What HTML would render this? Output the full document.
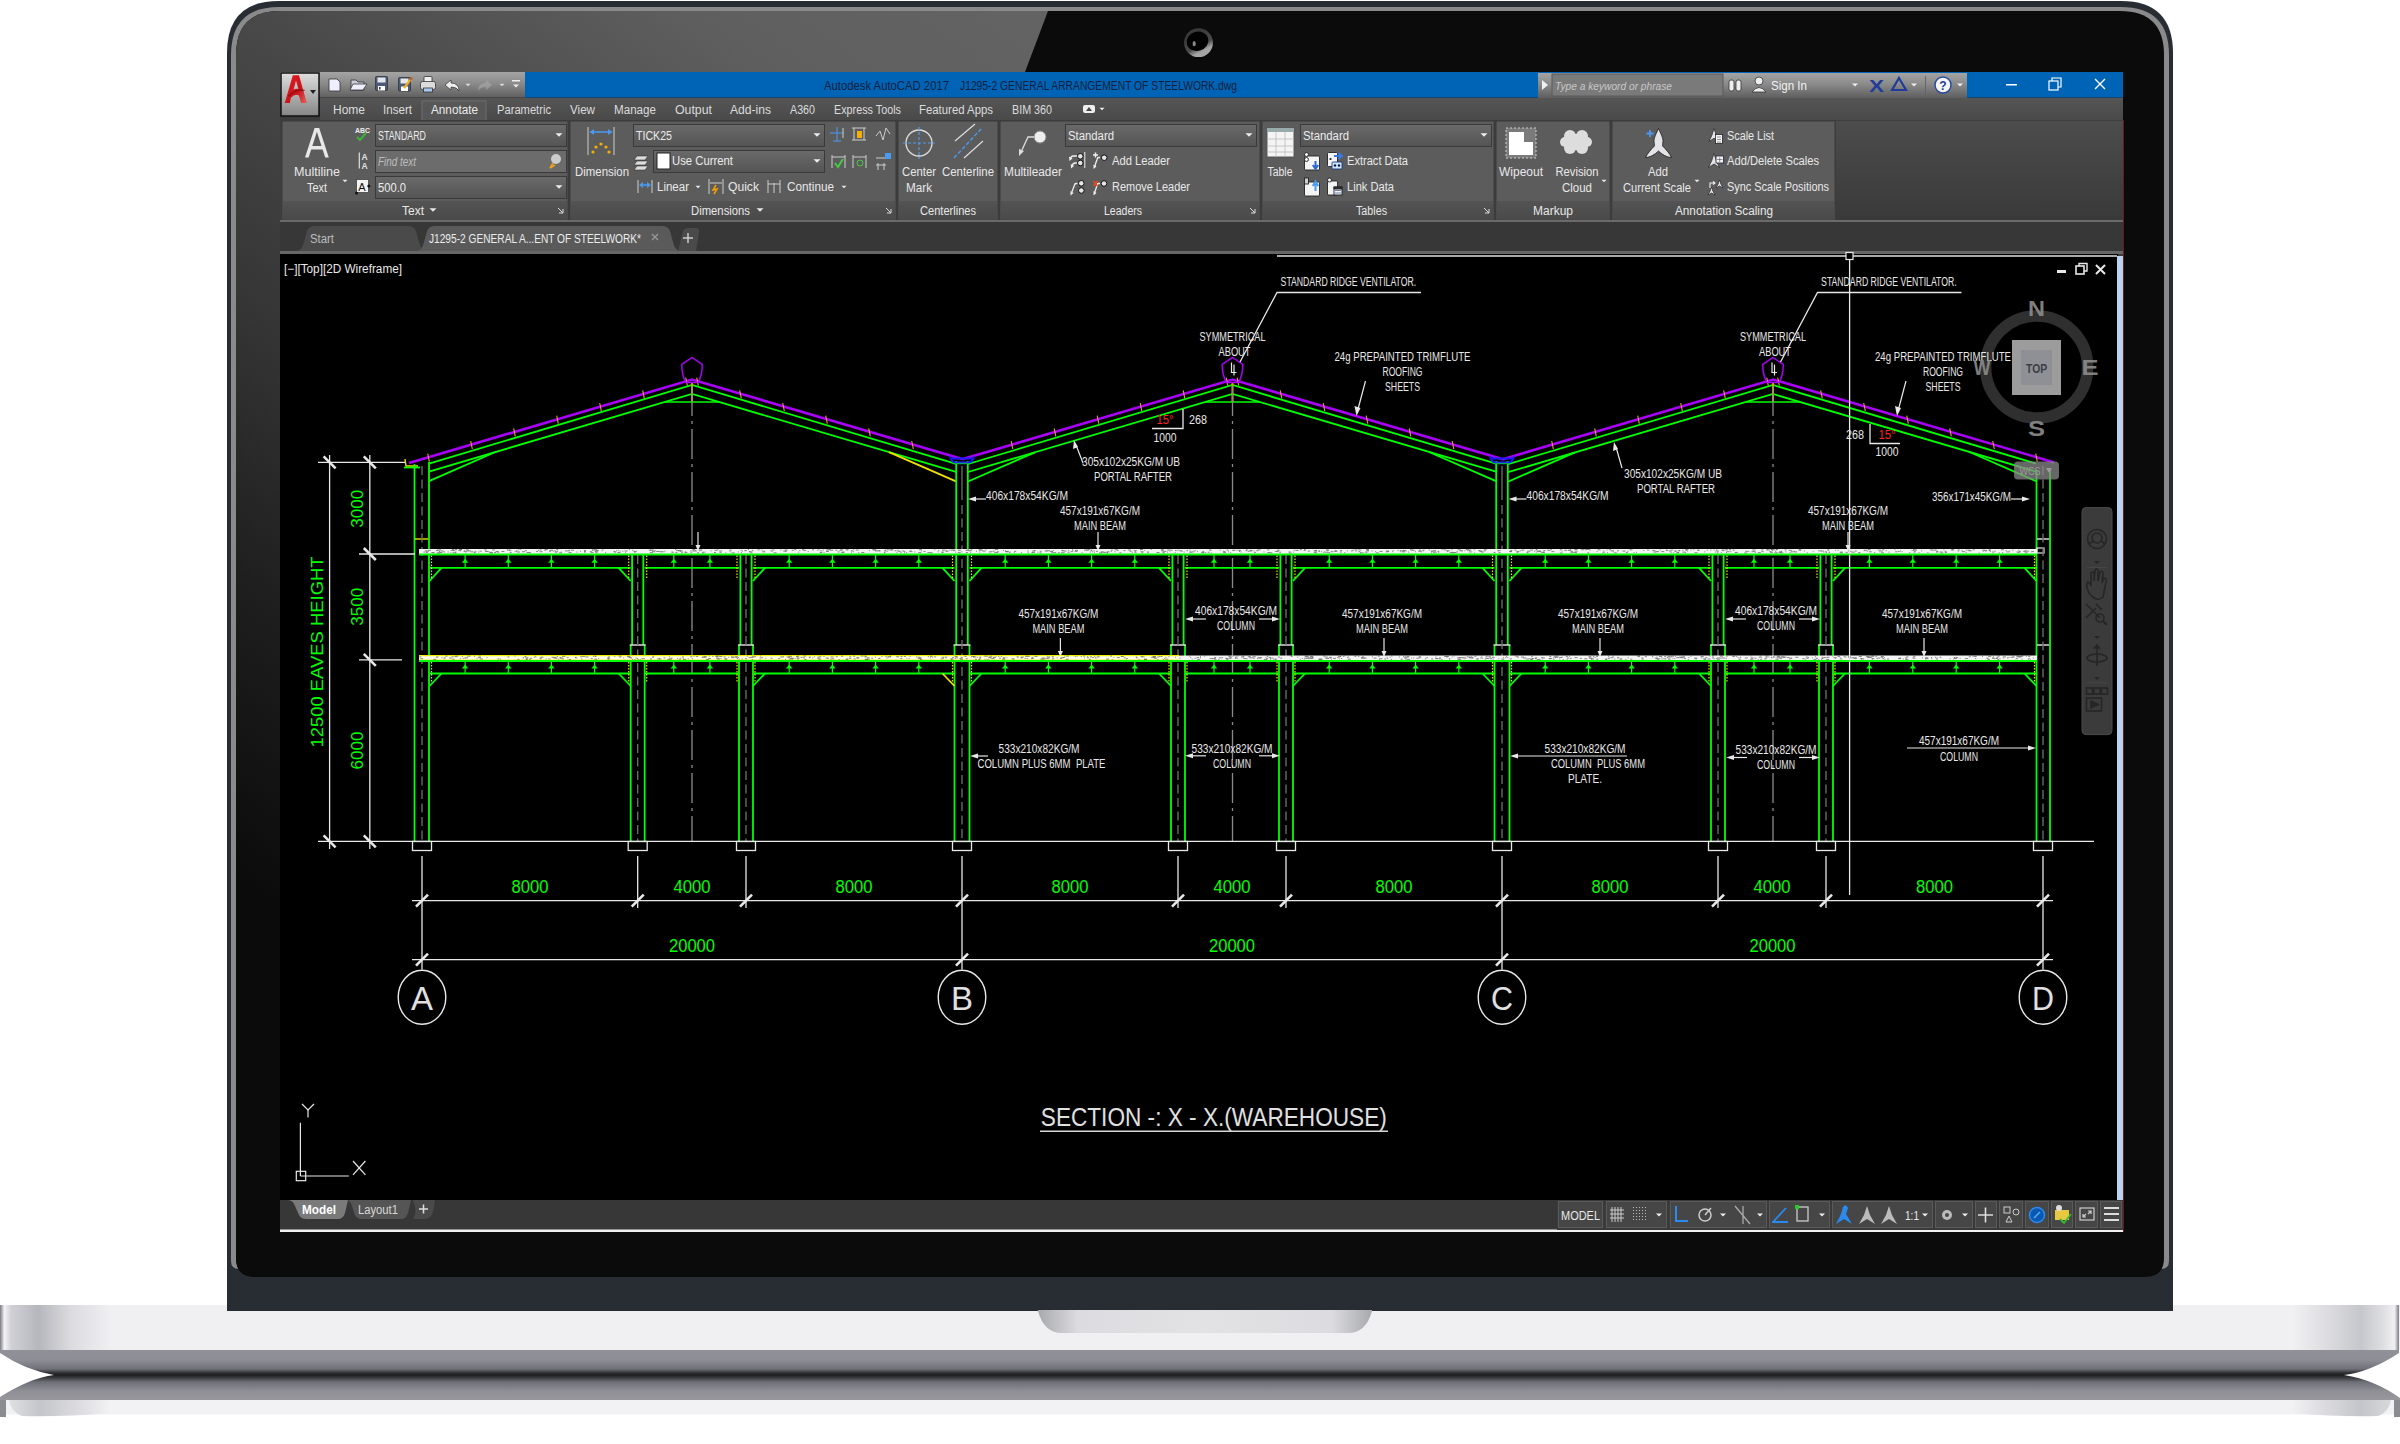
<!DOCTYPE html>
<html><head><meta charset="utf-8"><title>AutoCAD laptop</title>
<style>html,body{margin:0;padding:0;background:#fff;width:2400px;height:1444px;overflow:hidden}
svg{display:block;font-family:"Liberation Sans",sans-serif}</style></head>
<body><svg width="2400" height="1444" viewBox="0 0 2400 1444">
<rect width="2400" height="1444" fill="#ffffff"/>
<defs>
<linearGradient id="gBase" x1="0" y1="0" x2="0" y2="1">
 <stop offset="0" stop-color="#8f9098"/><stop offset="0.2" stop-color="#8d8e96"/>
 <stop offset="0.38" stop-color="#6f7078"/><stop offset="0.46" stop-color="#2e2e31"/><stop offset="0.5" stop-color="#1e1e20"/>
 <stop offset="0.56" stop-color="#3c3d42"/><stop offset="0.64" stop-color="#6e7077"/><stop offset="0.82" stop-color="#8f8f96"/>
 <stop offset="1" stop-color="#97979c"/></linearGradient>
<linearGradient id="gEndL" x1="0" y1="0" x2="1" y2="0">
 <stop offset="0" stop-color="#7a7c84"/><stop offset="0.04" stop-color="#f4f4f6"/>
 <stop offset="0.1" stop-color="#d0d0d6"/><stop offset="0.35" stop-color="#b6b7bd"/>
 <stop offset="0.65" stop-color="#dcdce0"/><stop offset="1" stop-color="#efeff2"/></linearGradient>
<linearGradient id="gEndR" x1="1" y1="0" x2="0" y2="0">
 <stop offset="0" stop-color="#7a7c84"/><stop offset="0.04" stop-color="#f0f0f2"/>
 <stop offset="0.15" stop-color="#dedee2"/><stop offset="0.35" stop-color="#c6c7cc"/>
 <stop offset="0.65" stop-color="#dcdce0"/><stop offset="1" stop-color="#f2f2f4"/></linearGradient>
<linearGradient id="gEndL2" x1="0" y1="0" x2="1" y2="0">
 <stop offset="0" stop-color="#e0e0e4"/><stop offset="0.3" stop-color="#c4c5ca"/><stop offset="0.7" stop-color="#dedee2"/><stop offset="1" stop-color="#f3f3f5"/></linearGradient>
<linearGradient id="gEndR2" x1="1" y1="0" x2="0" y2="0">
 <stop offset="0" stop-color="#d8d8dc"/><stop offset="0.3" stop-color="#c4c5ca"/><stop offset="0.7" stop-color="#dedee2"/><stop offset="1" stop-color="#f3f3f5"/></linearGradient>
<linearGradient id="gNotch" x1="0" y1="0" x2="1" y2="0">
 <stop offset="0" stop-color="#a8a9ad"/><stop offset="0.12" stop-color="#dcdce0"/>
 <stop offset="0.5" stop-color="#e2e2e4"/><stop offset="0.88" stop-color="#dcdce0"/>
 <stop offset="1" stop-color="#a8a9ad"/></linearGradient>
<linearGradient id="gGloss" gradientUnits="userSpaceOnUse" x1="1000" y1="0" x2="339" y2="951">
 <stop offset="0" stop-color="#636363"/><stop offset="0.156" stop-color="#5f5f5f"/><stop offset="0.4" stop-color="#474747"/>
 <stop offset="0.59" stop-color="#353535"/><stop offset="0.79" stop-color="#1e1e1e"/>
 <stop offset="1" stop-color="#0b0b0b"/></linearGradient>
</defs>
<rect x="0" y="1305" width="2400" height="45" fill="#f0f0f2"/>
<rect x="0" y="1305" width="110" height="45" fill="url(#gEndL)"/>
<rect x="2290" y="1305" width="109" height="45" fill="url(#gEndR)"/>
<path d="M0,1350 L2399,1350 L2399,1353 Q2370,1372 2344,1375 Q2375,1380 2400,1398 L2400,1400 L0,1400 L0,1397 Q30,1378 54,1375 Q25,1370 0,1353 Z" fill="url(#gBase)"/>
<rect x="0" y="1400" width="2400" height="14.5" fill="#f2f2f4"/>
<path d="M0,1400 L6,1400 L6,1417 L0,1417 Z" fill="#8a8c92"/>
<path d="M9,1400 L112,1400 L112,1413 Q60,1417 22,1416 Q11,1412 9,1400 Z" fill="url(#gEndL2)"/>
<path d="M2290,1400 L2391,1400 Q2389,1412 2378,1416 Q2340,1417 2290,1413 Z" fill="url(#gEndR2)"/>
<path d="M2394,1400 L2400,1400 L2400,1417 L2394,1417 Z" fill="#8a8c92"/>
<path d="M279,1 L2121,1 Q2173,1 2173,53 L2173,1311 Q2173,1311 2173,1311 L227,1311 Q227,1311 227,1311 L227,53 Q227,1 279,1 Z" fill="#282d33"/>
<path d="M279,7 L2121,7 Q2169,7 2169,55 L2169,1261 Q2169,1269 2161,1269 L239,1269 Q231,1269 231,1261 L231,55 Q231,7 279,7 Z" fill="#8a8a8a"/>
<clipPath id="cInner"><path d="M280,11 L2120,11 Q2164,11 2164,55 L2164,1258 Q2164,1277 2145,1277 L255,1277 Q236,1277 236,1258 L236,55 Q236,11 280,11 Z"/></clipPath>
<path d="M280,11 L2120,11 Q2164,11 2164,55 L2164,1258 Q2164,1277 2145,1277 L255,1277 Q236,1277 236,1258 L236,55 Q236,11 280,11 Z" fill="#0b0b0b"/>
<g clip-path="url(#cInner)"><path d="M230,0 L1051,0 L1048,11 L1025,72 L571,1280 L230,1280 Z" fill="url(#gGloss)"/></g>
<path d="M1038,1310 L1372,1310 L1372,1311 Q1366,1333 1348,1333 L1062,1333 Q1044,1333 1038,1311 Z" fill="url(#gNotch)"/>
<linearGradient id="gCam" x1="0.3" y1="0.2" x2="0.7" y2="0.95"><stop offset="0" stop-color="#3a3a3a"/><stop offset="0.55" stop-color="#4a4a4a"/><stop offset="0.8" stop-color="#a4a4a4"/><stop offset="1" stop-color="#a8a8a8"/></linearGradient>
<circle cx="1198.5" cy="42.7" r="14.4" fill="url(#gCam)"/>
<ellipse cx="1197.5" cy="41.3" rx="11" ry="9.6" transform="rotate(-15 1197.5 41.3)" fill="#020202"/>
<ellipse cx="1194.2" cy="43.7" rx="1.6" ry="2.6" fill="#8a8a8a"/>
<defs>
<linearGradient id="gQAT" x1="0" y1="0" x2="0" y2="1"><stop offset="0" stop-color="#a4a4a4"/><stop offset="0.45" stop-color="#8a8a8a"/><stop offset="1" stop-color="#5e5e5e"/></linearGradient>
<linearGradient id="gAbtn" x1="0" y1="0" x2="0" y2="1"><stop offset="0" stop-color="#dedede"/><stop offset="1" stop-color="#858585"/></linearGradient>
<linearGradient id="gRib" x1="0" y1="0" x2="0" y2="1"><stop offset="0" stop-color="#5c5c5c"/><stop offset="1" stop-color="#5c5c5c"/></linearGradient><linearGradient id="gRibT" x1="0" y1="0" x2="0" y2="1"><stop offset="0" stop-color="#535353"/><stop offset="1" stop-color="#4a4a4a"/></linearGradient><linearGradient id="gTabRow" x1="0" y1="0" x2="0" y2="1"><stop offset="0" stop-color="#555555"/><stop offset="1" stop-color="#4a4a4a"/></linearGradient>
<linearGradient id="gRibR" x1="0" y1="0" x2="0" y2="1"><stop offset="0" stop-color="#4c4c4c"/><stop offset="1" stop-color="#393939"/></linearGradient>
<linearGradient id="gCombo" x1="0" y1="0" x2="0" y2="1"><stop offset="0" stop-color="#6a6a6a"/><stop offset="1" stop-color="#545454"/></linearGradient>
<linearGradient id="gTab" x1="0" y1="0" x2="0" y2="1"><stop offset="0" stop-color="#6a6a6a"/><stop offset="1" stop-color="#555"/></linearGradient>
<linearGradient id="gAred" x1="0" y1="0" x2="1" y2="1"><stop offset="0" stop-color="#e41c22"/><stop offset="0.6" stop-color="#c8141a"/><stop offset="1" stop-color="#e86060"/></linearGradient>
</defs>
<rect x="280" y="72" width="1843" height="1160" fill="#3c3c3c"/>
<rect x="525" y="72" width="1598" height="26" fill="#0064b6"/>
<rect x="280" y="72" width="245" height="26" fill="url(#gQAT)"/>
<rect x="280" y="97.5" width="1843" height="1.2" fill="#2e2a2a"/>
<rect x="1538" y="73" width="429" height="25" fill="url(#gQAT)"/>
<text x="824" y="90" font-size="12.5" fill="#14203a" textLength="125" lengthAdjust="spacingAndGlyphs">Autodesk AutoCAD 2017</text><text x="960" y="90" font-size="12.5" fill="#14203a" textLength="277" lengthAdjust="spacingAndGlyphs">J1295-2 GENERAL ARRANGEMENT OF STEELWORK.dwg</text>
<rect x="1552" y="74" width="171" height="22" fill="#7a7a7a" stroke="#5a5a5a" stroke-width="1"/>
<path d="M1542,80 L1548,85 L1542,90 Z" fill="#f0f0f0"/>
<text x="1555" y="90" font-size="11.5" fill="#c8c8c8" textLength="117" lengthAdjust="spacingAndGlyphs" font-style="italic">Type a keyword or phrase</text>
<g fill="#eee" stroke="#333" stroke-width="0.8"><rect x="1729" y="80" width="5" height="11" rx="2"/><rect x="1736" y="80" width="5" height="11" rx="2"/></g>
<circle cx="1759" cy="81" r="4" fill="#eee" stroke="#333" stroke-width="0.8"/><path d="M1752,92 Q1759,83 1766,92 Z" fill="#eee" stroke="#333" stroke-width="0.8"/>
<text x="1771" y="90" font-size="12.5" fill="#f2f2f2" textLength="36" lengthAdjust="spacingAndGlyphs">Sign In</text>
<path d="M1852,83.5 L1858,83.5 L1855,86.5 Z" fill="#eee"/>
<text x="1869" y="92" font-size="17" fill="#1f3c9a" textLength="15" lengthAdjust="spacingAndGlyphs" font-weight="bold">X</text>
<path d="M1899,78 L1906,90 L1892,90 Z" fill="none" stroke="#1f3c9a" stroke-width="2.2"/>
<path d="M1911,83.5 L1917,83.5 L1914,86.5 Z" fill="#eee"/>
<rect x="1925" y="76" width="1" height="20" fill="#666"/>
<circle cx="1943" cy="85" r="8" fill="#f4f4f4" stroke="#2a4aa0" stroke-width="1.5"/>
<text x="1943" y="90" font-size="12" fill="#1f3c9a" text-anchor="middle" font-weight="bold">?</text>
<path d="M1957,83.5 L1963,83.5 L1960,86.5 Z" fill="#eee"/>
<rect x="2006" y="84" width="11" height="1.5" fill="#fff"/>
<rect x="2049" y="81" width="9" height="9" fill="none" stroke="#fff" stroke-width="1.2"/><path d="M2052,81 L2052,78 L2061,78 L2061,87 L2058,87" fill="none" stroke="#fff" stroke-width="1.2"/>
<path d="M2095,79 L2105,89 M2105,79 L2095,89" stroke="#fff" stroke-width="1.4"/>
<rect x="281" y="73" width="38" height="43" fill="url(#gAbtn)" stroke="#111" stroke-width="1.5"/>
<path fill-rule="evenodd" d="M284.8,103 L292.8,75.3 L299,75.3 L306.8,103 L301,103 L299,95.5 Q295,93 290.8,98 L289.8,103 Z M296,80.5 L293.6,89.5 Q296,88.5 298.4,89 Z" fill="url(#gAred)"/>
<path d="M288.5,96.5 Q296,88 304.5,90.5" stroke="#8a0c10" stroke-width="1.6" fill="none" opacity="0.8"/>
<path d="M310,90 L316,90 L313,94 Z" fill="#222"/>
<g stroke="#333" stroke-width="0.8"><path d="M329,79 L337,79 L340,82 L340,91 L329,91 Z" fill="#eef"/><path d="M351,80 L356,80 L358,82 L364,82 L364,90 L351,90 Z" fill="#ccd"/><path d="M353,84 L367,84 L363,90 L350,90 Z" fill="#eef"/><rect x="375.5" y="76.5" width="12" height="14" rx="1" fill="#4c5a78"/><rect x="377.5" y="77.5" width="8" height="5" fill="#e4e6ee" stroke="none"/><rect x="378" y="86" width="7" height="4.5" fill="#fff" stroke="none"/><rect x="379" y="87" width="1.5" height="2.5" fill="#333" stroke="none"/><rect x="398.5" y="77.5" width="12" height="13.5" rx="1" fill="#4c5a78"/><rect x="400.5" y="78.5" width="8" height="5" fill="#e4e6ee" stroke="none"/><rect x="401" y="86.5" width="7" height="4.5" fill="#fff" stroke="none"/><path d="M404,88 L411,79" stroke="#f0b020" stroke-width="2.2"/><path d="M410,80 L412,77.5" stroke="#c06020" stroke-width="2.2"/><rect x="424" y="76.5" width="8" height="6" rx="1" fill="#f0f0f0"/><rect x="420.5" y="81.5" width="15" height="8" rx="2" fill="#dcdcdc"/><rect x="423.5" y="88" width="9" height="4" fill="#a8c8f0"/></g>
<path d="M445,85 L451,80 L451,83 Q459,83 459,91 Q457,87 451,87 L451,90 Z" fill="#eee" stroke="#333" stroke-width="0.7"/>
<path d="M465.5,83.75 L470.5,83.75 L468,86.25 Z" fill="#ddd"/>
<path d="M492,85 L486,80 L486,83 Q478,83 478,91 Q480,87 486,87 L486,90 Z" fill="#aaa" opacity="0.6"/>
<path d="M499.5,83.75 L504.5,83.75 L502,86.25 Z" fill="#ddd"/>
<rect x="512" y="80" width="8" height="1.5" fill="#eee"/><path d="M513,84.5 L519,84.5 L516,87.5 Z" fill="#eee"/>
<rect x="320" y="98" width="1803" height="22" fill="url(#gTabRow)"/>
<rect x="422" y="101" width="64" height="21" fill="#575757" stroke="#6e6e6e" stroke-width="1"/>
<text x="333" y="114" font-size="12.5" fill="#dcdcdc" textLength="32" lengthAdjust="spacingAndGlyphs">Home</text>
<text x="383" y="114" font-size="12.5" fill="#dcdcdc" textLength="29" lengthAdjust="spacingAndGlyphs">Insert</text>
<text x="431" y="114" font-size="12.5" fill="#eaeaea" textLength="47" lengthAdjust="spacingAndGlyphs">Annotate</text>
<text x="497" y="114" font-size="12.5" fill="#dcdcdc" textLength="54" lengthAdjust="spacingAndGlyphs">Parametric</text>
<text x="570" y="114" font-size="12.5" fill="#dcdcdc" textLength="25" lengthAdjust="spacingAndGlyphs">View</text>
<text x="614" y="114" font-size="12.5" fill="#dcdcdc" textLength="42" lengthAdjust="spacingAndGlyphs">Manage</text>
<text x="675" y="114" font-size="12.5" fill="#dcdcdc" textLength="37" lengthAdjust="spacingAndGlyphs">Output</text>
<text x="730" y="114" font-size="12.5" fill="#dcdcdc" textLength="41" lengthAdjust="spacingAndGlyphs">Add-ins</text>
<text x="790" y="114" font-size="12.5" fill="#dcdcdc" textLength="25" lengthAdjust="spacingAndGlyphs">A360</text>
<text x="834" y="114" font-size="12.5" fill="#dcdcdc" textLength="67" lengthAdjust="spacingAndGlyphs">Express Tools</text>
<text x="919" y="114" font-size="12.5" fill="#dcdcdc" textLength="74" lengthAdjust="spacingAndGlyphs">Featured Apps</text>
<text x="1012" y="114" font-size="12.5" fill="#dcdcdc" textLength="40" lengthAdjust="spacingAndGlyphs">BIM 360</text>
<rect x="1083" y="105" width="12" height="8" rx="2" fill="#eee"/><path d="M1086,111 L1089,107 L1092,111 Z" fill="#444"/><path d="M1099.5,107.75 L1104.5,107.75 L1102,110.25 Z" fill="#eee"/>
<rect x="280" y="120" width="1843" height="101" fill="#3e3e3e"/>
<rect x="1836" y="121" width="287" height="100" fill="url(#gRibR)"/>
<rect x="282" y="121" width="286" height="99" fill="url(#gRib)" stroke="#3a3a3a" stroke-width="1"/>
<rect x="283" y="201" width="284" height="19" fill="url(#gRibT)"/>
<path d="M558,208 L563,213 M563,209 L563,213 L559,213" stroke="#ddd" stroke-width="1" fill="none"/>
<rect x="570" y="121" width="326" height="99" fill="url(#gRib)" stroke="#3a3a3a" stroke-width="1"/>
<rect x="571" y="201" width="324" height="19" fill="url(#gRibT)"/>
<path d="M886,208 L891,213 M891,209 L891,213 L887,213" stroke="#ddd" stroke-width="1" fill="none"/>
<rect x="898" y="121" width="100" height="99" fill="url(#gRib)" stroke="#3a3a3a" stroke-width="1"/>
<rect x="899" y="201" width="98" height="19" fill="url(#gRibT)"/>
<rect x="1000" y="121" width="260" height="99" fill="url(#gRib)" stroke="#3a3a3a" stroke-width="1"/>
<rect x="1001" y="201" width="258" height="19" fill="url(#gRibT)"/>
<path d="M1250,208 L1255,213 M1255,209 L1255,213 L1251,213" stroke="#ddd" stroke-width="1" fill="none"/>
<rect x="1262" y="121" width="232" height="99" fill="url(#gRib)" stroke="#3a3a3a" stroke-width="1"/>
<rect x="1263" y="201" width="230" height="19" fill="url(#gRibT)"/>
<path d="M1484,208 L1489,213 M1489,209 L1489,213 L1485,213" stroke="#ddd" stroke-width="1" fill="none"/>
<rect x="1496" y="121" width="114" height="99" fill="url(#gRib)" stroke="#3a3a3a" stroke-width="1"/>
<rect x="1497" y="201" width="112" height="19" fill="url(#gRibT)"/>
<rect x="1612" y="121" width="223" height="99" fill="url(#gRib)" stroke="#3a3a3a" stroke-width="1"/>
<rect x="1613" y="201" width="221" height="19" fill="url(#gRibT)"/>
<text x="402" y="215" font-size="12.5" fill="#e8e8e8" textLength="22" lengthAdjust="spacingAndGlyphs">Text</text><path d="M429.5,208.25 L436.5,208.25 L433,211.75 Z" fill="#e8e8e8"/>
<text x="691" y="215" font-size="12.5" fill="#e8e8e8" textLength="59" lengthAdjust="spacingAndGlyphs">Dimensions</text><path d="M756.5,208.25 L763.5,208.25 L760,211.75 Z" fill="#e8e8e8"/>
<text x="920" y="215" font-size="12.5" fill="#e8e8e8" textLength="56" lengthAdjust="spacingAndGlyphs">Centerlines</text>
<text x="1104" y="215" font-size="12.5" fill="#e8e8e8" textLength="38" lengthAdjust="spacingAndGlyphs">Leaders</text>
<text x="1356" y="215" font-size="12.5" fill="#e8e8e8" textLength="31" lengthAdjust="spacingAndGlyphs">Tables</text>
<text x="1533" y="215" font-size="12.5" fill="#e8e8e8" textLength="40" lengthAdjust="spacingAndGlyphs">Markup</text>
<text x="1675" y="215" font-size="12.5" fill="#e8e8e8" textLength="98" lengthAdjust="spacingAndGlyphs">Annotation Scaling</text>
<path fill-rule="evenodd" d="M305,157.5 L314.6,128 L319.2,128 L328.8,157.5 L325.2,157.5 L322.6,149.5 L311.2,149.5 L308.6,157.5 Z M312.3,146 L321.5,146 L316.9,131.8 Z" fill="#e8e8e8"/>
<text x="317" y="176" font-size="12.5" fill="#e8e8e8" text-anchor="middle" textLength="46" lengthAdjust="spacingAndGlyphs">Multiline</text>
<text x="317" y="192" font-size="12.5" fill="#e8e8e8" text-anchor="middle" textLength="20" lengthAdjust="spacingAndGlyphs">Text</text><path d="M342.5,179.75 L347.5,179.75 L345,182.25 Z" fill="#e8e8e8"/>
<text x="355" y="133" font-size="7" fill="#eee" textLength="15" lengthAdjust="spacingAndGlyphs" font-weight="bold">ABC</text><path d="M357,137 L360,140 L366,133" stroke="#3bb33b" stroke-width="2" fill="none"/>
<path d="M359.3,152.5 L359.3,168.5" stroke="#e0e0e0" stroke-width="1.2"/><text x="361.5" y="160" font-size="8.5" fill="#e0e0e0" font-weight="bold">A</text><text x="361.5" y="168.5" font-size="8.5" fill="#e0e0e0" font-weight="bold">A</text>
<rect x="356.5" y="179.5" width="12" height="13" fill="#f2f2f2" stroke="#444" stroke-width="0.8"/><text x="358.2" y="191" font-size="11" fill="#111">A</text><circle cx="356.5" cy="193" r="1.5" fill="#111"/><circle cx="368.8" cy="186" r="1.5" fill="#111"/>
<rect x="375.5" y="124.5" width="191" height="22" fill="url(#gCombo)" stroke="#3a3a3a" stroke-width="1"/>
<text x="378" y="140" font-size="12.5" fill="#ececec" textLength="48" lengthAdjust="spacingAndGlyphs">STANDARD</text>
<path d="M555.5,133.25 L562.5,133.25 L559,136.75 Z" fill="#eee"/>
<rect x="375.5" y="150.5" width="191" height="22" fill="#6c6c6c" stroke="#3a3a3a" stroke-width="1"/>
<text x="378" y="166" font-size="12.5" fill="#bdbdbd" textLength="38" lengthAdjust="spacingAndGlyphs" font-style="italic">Find text</text>
<rect x="375.5" y="176.5" width="191" height="22" fill="url(#gCombo)" stroke="#3a3a3a" stroke-width="1"/>
<text x="378" y="192" font-size="12.5" fill="#ececec" textLength="28" lengthAdjust="spacingAndGlyphs">500.0</text>
<path d="M555.5,185.25 L562.5,185.25 L559,188.75 Z" fill="#eee"/>
<circle cx="556" cy="159" r="5" fill="#ccc"/><path d="M553,163 L550,168 L555,165" stroke="#f0a020" stroke-width="1.5" fill="none"/>
<path d="M588,127 L588,155 M614,127 L614,155" stroke="#ccc" stroke-width="1"/><path d="M590,132 L612,132" stroke="#4a9af0" stroke-width="1.5"/><path d="M590,132 L594,129 L594,135 Z M612,132 L608,129 L608,135 Z" fill="#4a9af0"/>
<g fill="#f5b000"><circle cx="601" cy="144" r="1.6"/><circle cx="596" cy="147" r="1.6"/><circle cx="606" cy="147" r="1.6"/><circle cx="593" cy="152" r="1.6"/><circle cx="609" cy="152" r="1.6"/></g>
<text x="602" y="176" font-size="12.5" fill="#e8e8e8" text-anchor="middle" textLength="54" lengthAdjust="spacingAndGlyphs">Dimension</text>
<rect x="633.5" y="124.5" width="191" height="22" fill="url(#gCombo)" stroke="#3a3a3a" stroke-width="1"/><text x="636" y="140" font-size="12.5" fill="#ececec" textLength="36" lengthAdjust="spacingAndGlyphs">TICK25</text><path d="M813.5,133.25 L820.5,133.25 L817,136.75 Z" fill="#eee"/>
<rect x="653.5" y="150.5" width="171" height="22" fill="url(#gCombo)" stroke="#3a3a3a" stroke-width="1"/><rect x="657" y="153" width="13" height="16" fill="#fff" stroke="#222" stroke-width="1"/><text x="672" y="165" font-size="12.5" fill="#ececec" textLength="61" lengthAdjust="spacingAndGlyphs">Use Current</text><path d="M813.5,159.25 L820.5,159.25 L817,162.75 Z" fill="#eee"/>
<path d="M637,156 L648,156 L645,160 L634,160 Z M637,161 L648,161 L645,165 L634,165 Z M637,166 L648,166 L645,170 L634,170 Z" fill="#ddd" stroke="#333" stroke-width="0.6"/>
<path d="M638,180 L638,193 M652,180 L652,193" stroke="#ccc" stroke-width="1"/><path d="M641,185 L649,185" stroke="#4a9af0" stroke-width="1.5"/><path d="M639,185 L643,182 L643,188 Z M651,185 L647,182 L647,188 Z" fill="#4a9af0"/><text x="657" y="191" font-size="12.5" fill="#e8e8e8" textLength="32" lengthAdjust="spacingAndGlyphs">Linear</text><path d="M695.5,185.75 L700.5,185.75 L698,188.25 Z" fill="#e8e8e8"/>
<path d="M709,179 L709,194 M723,179 L723,194 M710,183 L722,183" stroke="#ccc" stroke-width="1"/><path d="M716,185 L713,190 L717,189 L714,194" stroke="#f5a000" stroke-width="1.5" fill="none"/><text x="728" y="191" font-size="12.5" fill="#e8e8e8" textLength="31" lengthAdjust="spacingAndGlyphs">Quick</text>
<path d="M768,180 L768,193 M774,183 L774,193 M780,180 L780,193 M768,184 L780,184" stroke="#ccc" stroke-width="1"/><text x="787" y="191" font-size="12.5" fill="#e8e8e8" textLength="47" lengthAdjust="spacingAndGlyphs">Continue</text><path d="M841.5,185.75 L846.5,185.75 L844,188.25 Z" fill="#e8e8e8"/>
<g stroke="#ccc" stroke-width="1" fill="none"><path d="M830,133 L844,133 M837,127 L837,141 M833,141 L841,141" stroke="#4a9af0"/><path d="M843,128 L843,138"/><path d="M852,128 L866,128 M852,140 L866,140 M854,128 L854,140 M864,128 L864,140"/><rect x="857" y="131" width="5" height="7" fill="#f5b000" stroke="none"/><path d="M876,136 L880,131 L883,140 L886,128 L890,134"/><path d="M832,155 L832,168 M845,155 L845,168 M832,157 L845,157"/><path d="M835,163 L838,167 L843,159" stroke="#4c4" stroke-width="2"/><path d="M853,155 L853,168 M866,155 L866,168 M853,157 L866,157"/><circle cx="860" cy="163" r="3" stroke="#4c4"/><path d="M876,158 L886,158 M878,163 L878,170 M884,163 L884,170 M876,165 L886,165"/><rect x="885" y="153" width="6" height="6" fill="#4a9af0" stroke="none"/></g>
<circle cx="919" cy="143" r="13" fill="none" stroke="#ddd" stroke-width="1.3"/><path d="M903,143 L935,143 M919,127 L919,159" stroke="#4a9af0" stroke-width="1.2" stroke-dasharray="3,2"/>
<text x="919" y="176" font-size="12.5" fill="#e8e8e8" text-anchor="middle" textLength="34" lengthAdjust="spacingAndGlyphs">Center</text><text x="919" y="192" font-size="12.5" fill="#e8e8e8" text-anchor="middle" textLength="26" lengthAdjust="spacingAndGlyphs">Mark</text>
<path d="M955,141 L975,124 M964,158 L983,141" stroke="#ddd" stroke-width="1.2"/><path d="M954,158 L981,129" stroke="#4a9af0" stroke-width="1.4" stroke-dasharray="4,2"/>
<text x="968" y="176" font-size="12.5" fill="#e8e8e8" text-anchor="middle" textLength="52" lengthAdjust="spacingAndGlyphs">Centerline</text>
<circle cx="1040" cy="137" r="6" fill="#eee" stroke="#888"/><path d="M1034,137 L1028,137 L1021,152" stroke="#ddd" stroke-width="1.3" fill="none"/><path d="M1019,156 L1019,149 L1024,151 Z" fill="#ddd"/>
<text x="1033" y="176" font-size="12.5" fill="#e8e8e8" text-anchor="middle" textLength="58" lengthAdjust="spacingAndGlyphs">Multileader</text>
<rect x="1065.5" y="124.5" width="191" height="22" fill="url(#gCombo)" stroke="#3a3a3a" stroke-width="1"/><text x="1068" y="140" font-size="12.5" fill="#ececec" textLength="46" lengthAdjust="spacingAndGlyphs">Standard</text><path d="M1245.5,133.25 L1252.5,133.25 L1249,136.75 Z" fill="#eee"/>
<g stroke="#eee" stroke-width="1.3" fill="none"><path d="M1077,156 L1073,156 Q1071,156 1070.5,159"/><path d="M1077,163 L1075,163 Q1073,163 1072,166"/><path d="M1100,157.5 L1098.5,157.5 Q1097.5,157.5 1097,159.5 L1094.5,167"/><path d="M1077.5,183.5 L1076,183.5 Q1074.8,183.5 1074.3,185.5 L1071.5,193"/><path d="M1100,183.5 L1098.5,183.5 Q1097.5,183.5 1097,185.5 L1094.5,193"/><path d="M1084.8,152 L1084.8,168" stroke-width="1"/><path d="M1093,155 L1098,155 M1095.5,152.5 L1095.5,157.5" stroke-width="1.5"/></g>
<path d="M1069.5,161 L1069,156.5 L1072.5,158.5 Z M1071,168.5 L1070.8,164 L1074,166 Z M1093.5,169 L1093.5,164.5 L1096.5,166.5 Z M1070.5,195.5 L1070.5,191 L1073.5,193 Z M1093.5,195.5 L1093.5,191 L1096.5,193 Z" fill="#eee"/>
<g fill="#e4e4e8" stroke="#111" stroke-width="1"><circle cx="1080.3" cy="156.3" r="2.8"/><circle cx="1080.3" cy="163" r="2.8"/><circle cx="1104.2" cy="157.7" r="2.8"/><circle cx="1081.3" cy="183.3" r="2.8"/><circle cx="1081.3" cy="190.5" r="2.8"/><circle cx="1104" cy="183.5" r="2.8"/></g>
<path d="M1093.5,181 L1097.5,186 M1097.5,181 L1093.5,186" stroke="#e84a20" stroke-width="1.6"/>
<text x="1112" y="165" font-size="12.5" fill="#e8e8e8" textLength="58" lengthAdjust="spacingAndGlyphs">Add Leader</text><text x="1112" y="191" font-size="12.5" fill="#e8e8e8" textLength="78" lengthAdjust="spacingAndGlyphs">Remove Leader</text>
<rect x="1267" y="128" width="27" height="29" fill="#f4f4f4" stroke="#555" stroke-width="1"/><rect x="1267" y="128" width="27" height="4" fill="#9aa"/>
<path d="M1267,139 L1294,139 M1267,146 L1294,146 M1267,152 L1294,152 M1276,132 L1276,157 M1285,132 L1285,157" stroke="#bbb" stroke-width="0.8"/>
<text x="1280" y="176" font-size="12.5" fill="#e8e8e8" text-anchor="middle" textLength="25" lengthAdjust="spacingAndGlyphs">Table</text>
<rect x="1300.5" y="124.5" width="191" height="22" fill="url(#gCombo)" stroke="#3a3a3a" stroke-width="1"/><text x="1303" y="140" font-size="12.5" fill="#ececec" textLength="46" lengthAdjust="spacingAndGlyphs">Standard</text><path d="M1480.5,133.25 L1487.5,133.25 L1484,136.75 Z" fill="#eee"/>
<g stroke="#222" stroke-width="0.9"><rect x="1304.5" y="156" width="15" height="14" rx="1" fill="#f4f4f4"/><circle cx="1306.5" cy="154.5" r="2" fill="#f4f4f4"/><circle cx="1306.5" cy="159.5" r="2" fill="#f4f4f4"/><rect x="1327.5" y="152.5" width="10" height="14" rx="1" fill="#f4f4f4"/><rect x="1332" y="162" width="10" height="7" rx="1" fill="#cfe6ff" stroke="#1a3a7a"/><rect x="1304.5" y="182" width="15" height="14" rx="1" fill="#f4f4f4"/><rect x="1304.5" y="178" width="4" height="6" fill="#cfcfcf"/><rect x="1327.5" y="181" width="10" height="14" rx="1" fill="#f4f4f4"/><circle cx="1329.5" cy="180" r="2" fill="#f4f4f4"/><rect x="1334" y="187" width="8" height="8" fill="#f4f4f4"/><rect x="1334" y="187" width="8" height="2" fill="#333"/></g>
<path d="M1315.5,161 L1315.5,167 M1312.8,165 L1315.5,169 L1318.2,165" stroke="#2a6ad0" stroke-width="2" fill="none"/>
<path d="M1334,156 L1341,156 M1338.5,153 L1342,156 L1338.5,159" stroke="#3a7ae0" stroke-width="2" fill="none"/><circle cx="1335" cy="165.5" r="1.2" fill="#0a1a4a"/><circle cx="1339" cy="165.5" r="1.2" fill="#0a1a4a"/><circle cx="1330.5" cy="159" r="1.1" fill="#0a1a4a"/>
<path d="M1315.5,191 L1315.5,184 M1312.8,186 L1315.5,181.5 L1318.2,186" stroke="#4a9af0" stroke-width="2" fill="none"/>
<path d="M1335,190.5 L1341,190.5 M1335,193 L1341,193" stroke="#4a6a9a" stroke-width="0.8"/>
<text x="1347" y="165" font-size="12.5" fill="#e8e8e8" textLength="61" lengthAdjust="spacingAndGlyphs">Extract Data</text><text x="1347" y="191" font-size="12.5" fill="#e8e8e8" textLength="47" lengthAdjust="spacingAndGlyphs">Link Data</text>
<rect x="1506" y="128" width="30" height="30" fill="#7a7a7a" stroke="#ccc" stroke-width="1" stroke-dasharray="2,2"/><path d="M1509,132 L1524,132 L1524,142 L1533,142 L1533,155 L1509,155 Z" fill="#fff"/>
<text x="1521" y="176" font-size="12.5" fill="#e8e8e8" text-anchor="middle" textLength="44" lengthAdjust="spacingAndGlyphs">Wipeout</text>
<g fill="#ddd"><circle cx="1570" cy="136" r="6"/><circle cx="1582" cy="136" r="6"/><circle cx="1570" cy="148" r="6"/><circle cx="1582" cy="148" r="6"/><rect x="1566" y="134" width="20" height="16"/><circle cx="1565" cy="142" r="5"/><circle cx="1587" cy="142" r="5"/></g>
<text x="1577" y="176" font-size="12.5" fill="#e8e8e8" text-anchor="middle" textLength="43" lengthAdjust="spacingAndGlyphs">Revision</text><text x="1577" y="192" font-size="12.5" fill="#e8e8e8" text-anchor="middle" textLength="30" lengthAdjust="spacingAndGlyphs">Cloud</text><path d="M1601.5,179.75 L1606.5,179.75 L1604,182.25 Z" fill="#e8e8e8"/>
<path d="M1658.5,128.5 C1660.5,133 1663.5,138 1663,142 C1662.7,144 1662.2,145 1662.8,146.2 C1665.5,149 1669.5,153 1671.5,157.5 C1667,157.5 1662,154.5 1658.5,151 C1655,154.5 1650,157.5 1645.5,157.5 C1647.5,153 1651.5,149 1654.2,146.2 C1654.8,145 1654.3,144 1654,142 C1653.5,138 1656.5,133 1658.5,128.5 Z" fill="#e4e4e8" stroke="#222" stroke-width="0.9"/><path d="M1646.5,133.5 L1653.5,133.5 M1650,130 L1650,137" stroke="#4a9af0" stroke-width="1.8"/>
<text x="1658" y="176" font-size="12.5" fill="#e8e8e8" text-anchor="middle" textLength="20" lengthAdjust="spacingAndGlyphs">Add</text><text x="1657" y="192" font-size="12.5" fill="#e8e8e8" text-anchor="middle" textLength="68" lengthAdjust="spacingAndGlyphs">Current Scale</text><path d="M1694.5,179.75 L1699.5,179.75 L1697,182.25 Z" fill="#e8e8e8"/>
<g fill="#e6e6ea" stroke="#222" stroke-width="0.7"><path d="M1714,128.5 Q1715.5,133.05 1716.0,135.0 Q1717.5,138.25 1719.0,141.5 Q1716.0,139.55 1714,138.25 Q1712.0,139.55 1709.0,141.5 Q1710.5,138.25 1712.0,135.0 Q1712.5,133.05 1714,128.5 Z"/><path d="M1714,153.5 Q1715.65,158.4 1716.2,160.5 Q1717.85,164.0 1719.5,167.5 Q1716.2,165.4 1714,164.0 Q1711.8,165.4 1708.5,167.5 Q1710.15,164.0 1711.8,160.5 Q1712.35,158.4 1714,153.5 Z"/><path d="M1719.5,180 Q1720.55,182.8 1720.9,184.0 Q1721.95,186.0 1723.0,188 Q1720.9,186.8 1719.5,186.0 Q1718.1,186.8 1716.0,188 Q1717.05,186.0 1718.1,184.0 Q1718.45,182.8 1719.5,180 Z"/><path d="M1711.5,187 Q1712.55,189.8 1712.9,191.0 Q1713.95,193.0 1715.0,195 Q1712.9,193.8 1711.5,193.0 Q1710.1,193.8 1708.0,195 Q1709.05,193.0 1710.1,191.0 Q1710.45,189.8 1711.5,187 Z"/></g>
<rect x="1715.5" y="134.5" width="7" height="9" fill="#f4f4f4" stroke="#222" stroke-width="0.8"/><path d="M1717,137 L1721,137 M1717,139.5 L1721,139.5 M1717,142 L1721,142" stroke="#667" stroke-width="0.7"/>
<rect x="1716" y="156" width="7.5" height="7" fill="#f4f4f4" stroke="#334" stroke-width="0.9"/><path d="M1717,159.5 L1722.5,159.5 M1719.7,157.5 L1719.7,162" stroke="#667" stroke-width="0.7"/>
<path d="M1710,188 L1710,183 L1714.5,183 M1713,181.3 L1715,183 L1713,184.7" stroke="#eee" stroke-width="1.1" fill="none"/>
<text x="1727" y="140" font-size="12.5" fill="#e8e8e8" textLength="47" lengthAdjust="spacingAndGlyphs">Scale List</text><text x="1727" y="165" font-size="12.5" fill="#e8e8e8" textLength="92" lengthAdjust="spacingAndGlyphs">Add/Delete Scales</text><text x="1727" y="191" font-size="12.5" fill="#e8e8e8" textLength="102" lengthAdjust="spacingAndGlyphs">Sync Scale Positions</text>
<rect x="280" y="221" width="1843" height="33" fill="#373737"/>
<rect x="280" y="220" width="1843" height="2" fill="#6a6a6a"/>
<path d="M296,251 Q302,251 304,242 L307,231 Q309,226 315,226 L408,226 Q414,226 416,231 L419,242 Q421,251 427,251 Z" fill="#4a4a4a"/>
<text x="310" y="243" font-size="12.5" fill="#bcbcbc" textLength="24" lengthAdjust="spacingAndGlyphs">Start</text>
<path d="M416,251 Q422,251 424,242 L427,231 Q429,226 435,226 L662,226 Q668,226 670,231 L673,242 Q675,251 681,251 Z" fill="#5a5a5a"/>
<text x="429" y="243" font-size="12.5" fill="#ececec" textLength="212" lengthAdjust="spacingAndGlyphs">J1295-2 GENERAL A...ENT OF STEELWORK*</text>
<path d="M652,234 L658,240 M658,234 L652,240" stroke="#999" stroke-width="1.3"/>
<path d="M678,251 L683,231 Q684,228 689,228 L696,228 Q700,228 699,233 L696,251 Z" fill="#4a4a4a"/>
<path d="M683,238 L693,238 M688,233 L688,243" stroke="#ccc" stroke-width="1.5"/>
<rect x="280" y="251" width="1843" height="3" fill="#666"/>
<rect x="280" y="254" width="1838" height="946" fill="#000"/>
<rect x="2117" y="256" width="6" height="944" fill="#bad4f0"/>
<rect x="2123" y="120" width="1" height="1112" fill="#6a1a1a"/>
<text x="284" y="273" font-size="12" fill="#e8e8e8" textLength="118" lengthAdjust="spacingAndGlyphs">[−][Top][2D Wireframe]</text>
<rect x="280" y="1200" width="1843" height="30" fill="#373737"/>
<rect x="280" y="1229.5" width="1843" height="2.5" fill="#f0f0f0"/>
<path d="M288,1200 Q293,1200 295,1206 L299,1215 Q301,1219 306,1219 L338,1219 Q343,1219 345,1213 L348,1200 Z" fill="#7a7a7a"/>
<text x="302" y="1214" font-size="12.5" fill="#fff" textLength="34" lengthAdjust="spacingAndGlyphs" font-weight="bold">Model</text>
<path d="M347,1200 Q350,1200 352,1206 L355,1215 Q357,1219 362,1219 L401,1219 Q406,1219 408,1213 L411,1200 Z" fill="#555"/>
<text x="358" y="1214" font-size="12.5" fill="#d8d8d8" textLength="40" lengthAdjust="spacingAndGlyphs">Layout1</text>
<path d="M413,1200 L435,1200 L433,1212 Q431,1219 425,1219 L413,1219 Q418,1212 413,1200 Z" fill="#4a4a4a"/>
<path d="M419,1209 L428,1209 M423.5,1204.5 L423.5,1213.5" stroke="#ddd" stroke-width="1.5"/>
<rect x="1557" y="1200" width="566" height="30" fill="#3a3a3a"/>
<rect x="1558.5" y="1201.5" width="44" height="26" fill="#464646" stroke="#5a5a5a" stroke-width="1"/>
<rect x="1606.5" y="1201.5" width="60" height="26" fill="#464646" stroke="#5a5a5a" stroke-width="1"/>
<rect x="1670.5" y="1201.5" width="96" height="26" fill="#464646" stroke="#5a5a5a" stroke-width="1"/>
<rect x="1769.5" y="1201.5" width="60" height="26" fill="#464646" stroke="#5a5a5a" stroke-width="1"/>
<rect x="1832.5" y="1201.5" width="100" height="26" fill="#464646" stroke="#5a5a5a" stroke-width="1"/>
<rect x="1935.5" y="1201.5" width="37" height="26" fill="#464646" stroke="#5a5a5a" stroke-width="1"/>
<rect x="1975.5" y="1201.5" width="21" height="26" fill="#464646" stroke="#5a5a5a" stroke-width="1"/>
<rect x="1999.5" y="1201.5" width="23" height="26" fill="#464646" stroke="#5a5a5a" stroke-width="1"/>
<rect x="2025.5" y="1201.5" width="23" height="26" fill="#464646" stroke="#5a5a5a" stroke-width="1"/>
<rect x="2051.5" y="1201.5" width="21" height="26" fill="#464646" stroke="#5a5a5a" stroke-width="1"/>
<rect x="2075.5" y="1201.5" width="22" height="26" fill="#464646" stroke="#5a5a5a" stroke-width="1"/>
<rect x="2100.5" y="1201.5" width="21" height="26" fill="#464646" stroke="#5a5a5a" stroke-width="1"/>
<text x="1561" y="1220" font-size="12.5" fill="#eaeaea" textLength="39" lengthAdjust="spacingAndGlyphs">MODEL</text>
<g stroke="#ccc" stroke-width="1" fill="none">
<path d="M1612,1207 L1612,1222 M1615,1207 L1615,1222 M1618,1207 L1618,1222 M1621,1207 L1621,1222 M1610,1210 L1624,1210 M1610,1214 L1624,1214 M1610,1218 L1624,1218"/>
</g>
<g fill="#bbb"><rect x="1633" y="1207" width="1" height="1"/><rect x="1633" y="1210" width="1" height="1"/><rect x="1633" y="1213" width="1" height="1"/><rect x="1633" y="1216" width="1" height="1"/><rect x="1633" y="1219" width="1" height="1"/><rect x="1636" y="1207" width="1" height="1"/><rect x="1636" y="1210" width="1" height="1"/><rect x="1636" y="1213" width="1" height="1"/><rect x="1636" y="1216" width="1" height="1"/><rect x="1636" y="1219" width="1" height="1"/><rect x="1639" y="1207" width="1" height="1"/><rect x="1639" y="1210" width="1" height="1"/><rect x="1639" y="1213" width="1" height="1"/><rect x="1639" y="1216" width="1" height="1"/><rect x="1639" y="1219" width="1" height="1"/><rect x="1642" y="1207" width="1" height="1"/><rect x="1642" y="1210" width="1" height="1"/><rect x="1642" y="1213" width="1" height="1"/><rect x="1642" y="1216" width="1" height="1"/><rect x="1642" y="1219" width="1" height="1"/><rect x="1645" y="1207" width="1" height="1"/><rect x="1645" y="1210" width="1" height="1"/><rect x="1645" y="1213" width="1" height="1"/><rect x="1645" y="1216" width="1" height="1"/><rect x="1645" y="1219" width="1" height="1"/></g>
<path d="M1656,1213.5 L1662,1213.5 L1659,1216.5 Z" fill="#eee"/>
<path d="M1720,1213.5 L1726,1213.5 L1723,1216.5 Z" fill="#eee"/>
<path d="M1757,1213.5 L1763,1213.5 L1760,1216.5 Z" fill="#eee"/>
<path d="M1819,1213.5 L1825,1213.5 L1822,1216.5 Z" fill="#eee"/>
<path d="M1922,1213.5 L1928,1213.5 L1925,1216.5 Z" fill="#eee"/>
<path d="M1962,1213.5 L1968,1213.5 L1965,1216.5 Z" fill="#eee"/>
<path d="M1676,1206 L1676,1221 L1688,1221" stroke="#2a8af0" stroke-width="2" fill="none"/>
<circle cx="1705" cy="1215" r="6" fill="none" stroke="#ccc" stroke-width="1.5"/><path d="M1705,1215 L1711,1208" stroke="#ccc" stroke-width="1.5"/>
<path d="M1735,1206 L1750,1224 M1743,1206 L1743,1224" stroke="#aaa" stroke-width="1.3"/>
<path d="M1773,1222 L1786,1208 M1772,1222 L1788,1222" stroke="#2a8af0" stroke-width="1.8"/>
<rect x="1797" y="1207" width="11" height="14" fill="none" stroke="#ccc" stroke-width="1.3"/><rect x="1795" y="1205" width="4" height="4" fill="#2c2"/>
<path d="M1843,1207 Q1846,1203 1848,1208 L1846,1214 L1852,1224 L1844,1219 L1836,1224 L1841,1214 Z" fill="#2a8af0"/>
<path d="M1867,1206 L1870,1215 L1875,1224 L1867,1219 L1859,1224 L1864,1215 Z" fill="#bbb"/>
<path d="M1889,1206 L1892,1215 L1897,1224 L1889,1219 L1881,1224 L1886,1215 Z" fill="#bbb"/>
<text x="1905" y="1220" font-size="12" fill="#eaeaea" textLength="14" lengthAdjust="spacingAndGlyphs">1:1</text>
<circle cx="1947" cy="1215" r="5" fill="#bbb"/><circle cx="1947" cy="1215" r="2" fill="#464646"/>
<path d="M1978,1215 L1993,1215 M1985.5,1207.5 L1985.5,1222.5" stroke="#ddd" stroke-width="1.6"/>
<rect x="2004" y="1207" width="6" height="6" fill="none" stroke="#ccc"/><circle cx="2016" cy="1212" r="3" fill="none" stroke="#ccc"/><path d="M2006,1222 L2009,1216 L2012,1222 Z" fill="none" stroke="#ccc"/>
<circle cx="2037" cy="1215" r="7.5" fill="#0a58b0" stroke="#2a8af0" stroke-width="1.5"/><path d="M2034,1218 L2040,1212" stroke="#4ab0ff" stroke-width="1.5"/>
<rect x="2055" y="1210" width="14" height="10" fill="#e8c840"/><circle cx="2059" cy="1208" r="3" fill="#ddd"/><path d="M2060,1219 L2064,1223 L2071,1214" stroke="#3b3" stroke-width="1.8" fill="none"/>
<rect x="2080" y="1208" width="14" height="12" fill="none" stroke="#ccc" stroke-width="1.2"/><path d="M2083,1217 L2086,1214 M2083,1214 L2083,1217 L2086,1217 M2091,1211 L2088,1214 M2088,1211 L2091,1211 L2091,1214" stroke="#ccc" stroke-width="1.2" fill="none"/>
<path d="M2104,1208 L2119,1208 M2104,1214 L2119,1214 M2104,1220 L2119,1220" stroke="#ddd" stroke-width="2"/>
<g stroke-linecap="butt">
<circle cx="2036.6" cy="367" r="51" fill="none" stroke="#2f2f2f" stroke-width="11.5"/>
<rect x="2012" y="340" width="49" height="55" fill="#9c9c9c"/><rect x="2021" y="350" width="31" height="35" fill="#8f9095"/>
<text x="2036.6" y="373.0" font-size="13.5" fill="#3a3e46" text-anchor="middle" textLength="21" lengthAdjust="spacingAndGlyphs" font-weight="bold">TOP</text>
<polyline points="409.0,463.0 692.0,379.5 962.0,459.1" fill="none" stroke="#a800f8" stroke-width="2.6"/>
<polyline points="429.0,463.6 692.0,385.0 956.0,463.9" fill="none" stroke="#00ff00" stroke-width="1.8"/>
<polyline points="429.0,471.6 692.0,394.0 956.0,471.9" fill="none" stroke="#00ff00" stroke-width="1.8"/>
<line x1="429.0" y1="481.1" x2="496.0" y2="451.8" stroke="#00ff00" stroke-width="1.8"/>
<line x1="956.0" y1="481.4" x2="889.0" y2="452.1" stroke="#f0e000" stroke-width="1.8"/>
<line x1="664.9" y1="402.0" x2="719.1" y2="402.0" stroke="#00ff00" stroke-width="1.6"/>
<line x1="692.0" y1="382.5" x2="692.0" y2="402.0" stroke="#e0a000" stroke-width="2"/>
<line x1="685.7" y1="377.6" x2="687.3" y2="385.6" stroke="#e8a030" stroke-width="1.1"/>
<line x1="696.7" y1="377.6" x2="698.3" y2="385.6" stroke="#e8a030" stroke-width="1.1"/>
<line x1="642.7" y1="390.3" x2="644.3" y2="398.3" stroke="#e8a030" stroke-width="1.1"/>
<line x1="739.7" y1="390.3" x2="741.3" y2="398.3" stroke="#e8a030" stroke-width="1.1"/>
<line x1="599.7" y1="403.0" x2="601.3" y2="411.0" stroke="#e8a030" stroke-width="1.1"/>
<line x1="782.7" y1="403.0" x2="784.3" y2="411.0" stroke="#e8a030" stroke-width="1.1"/>
<line x1="556.7" y1="415.7" x2="558.3" y2="423.7" stroke="#e8a030" stroke-width="1.1"/>
<line x1="825.7" y1="415.7" x2="827.3" y2="423.7" stroke="#e8a030" stroke-width="1.1"/>
<line x1="513.7" y1="428.4" x2="515.3" y2="436.4" stroke="#e8a030" stroke-width="1.1"/>
<line x1="868.7" y1="428.4" x2="870.3" y2="436.4" stroke="#e8a030" stroke-width="1.1"/>
<line x1="470.7" y1="441.0" x2="472.3" y2="449.0" stroke="#e8a030" stroke-width="1.1"/>
<line x1="911.7" y1="441.0" x2="913.3" y2="449.0" stroke="#e8a030" stroke-width="1.1"/>
<line x1="427.7" y1="453.7" x2="429.3" y2="461.7" stroke="#e8a030" stroke-width="1.1"/>
<path d="M692.0,357.5 L702.2,364.5 Q702.5,374.5 698.0,382.5 L686.0,382.5 Q681.5,374.5 681.8,364.5 Z" fill="none" stroke="#a800f8" stroke-width="1.5"/>
<polyline points="962.0,459.3 1232.5,379.5 1502.0,459.0" fill="none" stroke="#a800f8" stroke-width="2.6"/>
<polyline points="968.0,464.0 1232.5,385.0 1496.0,463.7" fill="none" stroke="#00ff00" stroke-width="1.8"/>
<polyline points="968.0,472.0 1232.5,394.0 1496.0,471.7" fill="none" stroke="#00ff00" stroke-width="1.8"/>
<line x1="968.0" y1="481.5" x2="1035.0" y2="452.3" stroke="#00ff00" stroke-width="1.8"/>
<line x1="1496.0" y1="481.2" x2="1429.0" y2="452.0" stroke="#00ff00" stroke-width="1.8"/>
<line x1="1205.4" y1="402.0" x2="1259.6" y2="402.0" stroke="#00ff00" stroke-width="1.6"/>
<line x1="1232.5" y1="382.5" x2="1232.5" y2="402.0" stroke="#e0a000" stroke-width="2"/>
<line x1="1226.2" y1="377.6" x2="1227.8" y2="385.6" stroke="#e8a030" stroke-width="1.1"/>
<line x1="1237.2" y1="377.6" x2="1238.8" y2="385.6" stroke="#e8a030" stroke-width="1.1"/>
<line x1="1183.2" y1="390.3" x2="1184.8" y2="398.3" stroke="#e8a030" stroke-width="1.1"/>
<line x1="1280.2" y1="390.3" x2="1281.8" y2="398.3" stroke="#e8a030" stroke-width="1.1"/>
<line x1="1140.2" y1="403.0" x2="1141.8" y2="411.0" stroke="#e8a030" stroke-width="1.1"/>
<line x1="1323.2" y1="403.0" x2="1324.8" y2="411.0" stroke="#e8a030" stroke-width="1.1"/>
<line x1="1097.2" y1="415.7" x2="1098.8" y2="423.7" stroke="#e8a030" stroke-width="1.1"/>
<line x1="1366.2" y1="415.7" x2="1367.8" y2="423.7" stroke="#e8a030" stroke-width="1.1"/>
<line x1="1054.2" y1="428.4" x2="1055.8" y2="436.4" stroke="#e8a030" stroke-width="1.1"/>
<line x1="1409.2" y1="428.4" x2="1410.8" y2="436.4" stroke="#e8a030" stroke-width="1.1"/>
<line x1="1011.2" y1="441.0" x2="1012.8" y2="449.0" stroke="#e8a030" stroke-width="1.1"/>
<line x1="1452.2" y1="441.0" x2="1453.8" y2="449.0" stroke="#e8a030" stroke-width="1.1"/>
<path d="M1232.5,357.5 L1242.8,364.5 Q1243.0,374.5 1238.5,382.5 L1226.5,382.5 Q1222.0,374.5 1222.2,364.5 Z" fill="none" stroke="#a800f8" stroke-width="1.5"/>
<path d="M1231.5,362.5 L1231.5,372.5 L1236.5,372.5 M1234.0,364.5 L1234.0,375.5" fill="none" stroke="#e8e8e8" stroke-width="1.2"/>
<polyline points="1502.0,459.4 1773.0,379.5 2054.0,462.4" fill="none" stroke="#a800f8" stroke-width="2.6"/>
<polyline points="1508.0,464.2 1773.0,385.0 2036.0,463.6" fill="none" stroke="#00ff00" stroke-width="1.8"/>
<polyline points="1508.0,472.2 1773.0,394.0 2036.0,471.6" fill="none" stroke="#00ff00" stroke-width="1.8"/>
<line x1="1508.0" y1="481.7" x2="1575.0" y2="452.4" stroke="#00ff00" stroke-width="1.8"/>
<line x1="2036.0" y1="481.1" x2="1969.0" y2="451.8" stroke="#00ff00" stroke-width="1.8"/>
<line x1="1745.9" y1="402.0" x2="1800.1" y2="402.0" stroke="#00ff00" stroke-width="1.6"/>
<line x1="1773.0" y1="382.5" x2="1773.0" y2="402.0" stroke="#e0a000" stroke-width="2"/>
<line x1="1766.7" y1="377.6" x2="1768.3" y2="385.6" stroke="#e8a030" stroke-width="1.1"/>
<line x1="1777.7" y1="377.6" x2="1779.3" y2="385.6" stroke="#e8a030" stroke-width="1.1"/>
<line x1="1723.7" y1="390.3" x2="1725.3" y2="398.3" stroke="#e8a030" stroke-width="1.1"/>
<line x1="1820.7" y1="390.3" x2="1822.3" y2="398.3" stroke="#e8a030" stroke-width="1.1"/>
<line x1="1680.7" y1="403.0" x2="1682.3" y2="411.0" stroke="#e8a030" stroke-width="1.1"/>
<line x1="1863.7" y1="403.0" x2="1865.3" y2="411.0" stroke="#e8a030" stroke-width="1.1"/>
<line x1="1637.7" y1="415.7" x2="1639.3" y2="423.7" stroke="#e8a030" stroke-width="1.1"/>
<line x1="1906.7" y1="415.7" x2="1908.3" y2="423.7" stroke="#e8a030" stroke-width="1.1"/>
<line x1="1594.7" y1="428.4" x2="1596.3" y2="436.4" stroke="#e8a030" stroke-width="1.1"/>
<line x1="1949.7" y1="428.4" x2="1951.3" y2="436.4" stroke="#e8a030" stroke-width="1.1"/>
<line x1="1551.7" y1="441.0" x2="1553.3" y2="449.0" stroke="#e8a030" stroke-width="1.1"/>
<line x1="1992.7" y1="441.0" x2="1994.3" y2="449.0" stroke="#e8a030" stroke-width="1.1"/>
<line x1="2035.7" y1="453.7" x2="2037.3" y2="461.7" stroke="#e8a030" stroke-width="1.1"/>
<path d="M1773.0,357.5 L1783.2,364.5 Q1783.5,374.5 1779.0,382.5 L1767.0,382.5 Q1762.5,374.5 1762.8,364.5 Z" fill="none" stroke="#a800f8" stroke-width="1.5"/>
<path d="M1772.0,362.5 L1772.0,372.5 L1777.0,372.5 M1774.5,364.5 L1774.5,375.5" fill="none" stroke="#e8e8e8" stroke-width="1.2"/>
<polyline points="405.0,459.0 406.0,466.0 418.0,466.0" fill="none" stroke="#f0e000" stroke-width="1.4"/>
<line x1="404.0" y1="467.5" x2="420.0" y2="467.5" stroke="#00ff00" stroke-width="1.8"/>
<line x1="414.5" y1="464.0" x2="414.5" y2="841.0" stroke="#00ff00" stroke-width="1.8"/>
<line x1="429.0" y1="462.0" x2="429.0" y2="841.0" stroke="#00ff00" stroke-width="1.8"/>
<line x1="415.0" y1="539.0" x2="428.0" y2="539.0" stroke="#f0e000" stroke-width="1.4"/>
<line x1="422.0" y1="466.0" x2="422.0" y2="841.0" stroke="#707070" stroke-width="1.3" stroke-dasharray="9,4.5"/>
<rect x="412.5" y="841.5" width="19" height="9" fill="none" stroke="#e8e8e8" stroke-width="1.3"/>
<line x1="632.1" y1="552.0" x2="632.1" y2="645.0" stroke="#00ff00" stroke-width="1.8"/>
<line x1="643.3" y1="552.0" x2="643.3" y2="645.0" stroke="#00ff00" stroke-width="1.8"/>
<line x1="630.7" y1="645.0" x2="630.7" y2="841.0" stroke="#00ff00" stroke-width="1.8"/>
<line x1="644.7" y1="645.0" x2="644.7" y2="841.0" stroke="#00ff00" stroke-width="1.8"/>
<line x1="629.7" y1="645.0" x2="645.7" y2="645.0" stroke="#e8e8e8" stroke-width="1.4"/>
<line x1="637.7" y1="555.0" x2="637.7" y2="841.0" stroke="#707070" stroke-width="1.3" stroke-dasharray="9,4.5"/>
<rect x="628.2" y="841.5" width="19" height="9" fill="none" stroke="#e8e8e8" stroke-width="1.3"/>
<line x1="740.4" y1="552.0" x2="740.4" y2="645.0" stroke="#00ff00" stroke-width="1.8"/>
<line x1="751.6" y1="552.0" x2="751.6" y2="645.0" stroke="#00ff00" stroke-width="1.8"/>
<line x1="739.0" y1="645.0" x2="739.0" y2="841.0" stroke="#00ff00" stroke-width="1.8"/>
<line x1="753.0" y1="645.0" x2="753.0" y2="841.0" stroke="#00ff00" stroke-width="1.8"/>
<line x1="738.0" y1="645.0" x2="754.0" y2="645.0" stroke="#e8e8e8" stroke-width="1.4"/>
<line x1="746.0" y1="555.0" x2="746.0" y2="841.0" stroke="#707070" stroke-width="1.3" stroke-dasharray="9,4.5"/>
<rect x="736.5" y="841.5" width="19" height="9" fill="none" stroke="#e8e8e8" stroke-width="1.3"/>
<line x1="956.2" y1="461.0" x2="956.2" y2="645.0" stroke="#00ff00" stroke-width="1.8"/>
<line x1="967.8" y1="461.0" x2="967.8" y2="645.0" stroke="#00ff00" stroke-width="1.8"/>
<line x1="954.5" y1="645.0" x2="954.5" y2="841.0" stroke="#00ff00" stroke-width="1.8"/>
<line x1="969.5" y1="645.0" x2="969.5" y2="841.0" stroke="#00ff00" stroke-width="1.8"/>
<line x1="953.5" y1="645.0" x2="970.5" y2="645.0" stroke="#e8e8e8" stroke-width="1.4"/>
<path d="M950,456 Q951,462.5 956,462.5 L968,462.5 Q973,462.5 974,456 M952,458.5 L972,458.5" fill="none" stroke="#1a1aff" stroke-width="1.8"/>
<line x1="956.0" y1="463.5" x2="968.0" y2="463.5" stroke="#10a060" stroke-width="1.5"/>
<line x1="962.0" y1="466.0" x2="962.0" y2="500.0" stroke="#707070" stroke-width="1.3"/>
<line x1="962.0" y1="505.0" x2="962.0" y2="841.0" stroke="#707070" stroke-width="1.3" stroke-dasharray="9,4.5"/>
<rect x="952.5" y="841.5" width="19" height="9" fill="none" stroke="#e8e8e8" stroke-width="1.3"/>
<line x1="1172.4" y1="552.0" x2="1172.4" y2="645.0" stroke="#00ff00" stroke-width="1.8"/>
<line x1="1183.6" y1="552.0" x2="1183.6" y2="645.0" stroke="#00ff00" stroke-width="1.8"/>
<line x1="1171.0" y1="645.0" x2="1171.0" y2="841.0" stroke="#00ff00" stroke-width="1.8"/>
<line x1="1185.0" y1="645.0" x2="1185.0" y2="841.0" stroke="#00ff00" stroke-width="1.8"/>
<line x1="1170.0" y1="645.0" x2="1186.0" y2="645.0" stroke="#e8e8e8" stroke-width="1.4"/>
<line x1="1178.0" y1="555.0" x2="1178.0" y2="841.0" stroke="#707070" stroke-width="1.3" stroke-dasharray="9,4.5"/>
<rect x="1168.5" y="841.5" width="19" height="9" fill="none" stroke="#e8e8e8" stroke-width="1.3"/>
<line x1="1280.4" y1="552.0" x2="1280.4" y2="645.0" stroke="#00ff00" stroke-width="1.8"/>
<line x1="1291.6" y1="552.0" x2="1291.6" y2="645.0" stroke="#00ff00" stroke-width="1.8"/>
<line x1="1279.0" y1="645.0" x2="1279.0" y2="841.0" stroke="#00ff00" stroke-width="1.8"/>
<line x1="1293.0" y1="645.0" x2="1293.0" y2="841.0" stroke="#00ff00" stroke-width="1.8"/>
<line x1="1278.0" y1="645.0" x2="1294.0" y2="645.0" stroke="#e8e8e8" stroke-width="1.4"/>
<line x1="1286.0" y1="555.0" x2="1286.0" y2="841.0" stroke="#707070" stroke-width="1.3" stroke-dasharray="9,4.5"/>
<rect x="1276.5" y="841.5" width="19" height="9" fill="none" stroke="#e8e8e8" stroke-width="1.3"/>
<line x1="1496.2" y1="461.0" x2="1496.2" y2="645.0" stroke="#00ff00" stroke-width="1.8"/>
<line x1="1507.8" y1="461.0" x2="1507.8" y2="645.0" stroke="#00ff00" stroke-width="1.8"/>
<line x1="1494.5" y1="645.0" x2="1494.5" y2="841.0" stroke="#00ff00" stroke-width="1.8"/>
<line x1="1509.5" y1="645.0" x2="1509.5" y2="841.0" stroke="#00ff00" stroke-width="1.8"/>
<line x1="1493.5" y1="645.0" x2="1510.5" y2="645.0" stroke="#e8e8e8" stroke-width="1.4"/>
<path d="M1490,456 Q1491,462.5 1496,462.5 L1508,462.5 Q1513,462.5 1514,456 M1492,458.5 L1512,458.5" fill="none" stroke="#1a1aff" stroke-width="1.8"/>
<line x1="1496.0" y1="463.5" x2="1508.0" y2="463.5" stroke="#10a060" stroke-width="1.5"/>
<line x1="1502.0" y1="466.0" x2="1502.0" y2="500.0" stroke="#707070" stroke-width="1.3"/>
<line x1="1502.0" y1="505.0" x2="1502.0" y2="841.0" stroke="#707070" stroke-width="1.3" stroke-dasharray="9,4.5"/>
<rect x="1492.5" y="841.5" width="19" height="9" fill="none" stroke="#e8e8e8" stroke-width="1.3"/>
<line x1="1712.4" y1="552.0" x2="1712.4" y2="645.0" stroke="#00ff00" stroke-width="1.8"/>
<line x1="1723.6" y1="552.0" x2="1723.6" y2="645.0" stroke="#00ff00" stroke-width="1.8"/>
<line x1="1711.0" y1="645.0" x2="1711.0" y2="841.0" stroke="#00ff00" stroke-width="1.8"/>
<line x1="1725.0" y1="645.0" x2="1725.0" y2="841.0" stroke="#00ff00" stroke-width="1.8"/>
<line x1="1710.0" y1="645.0" x2="1726.0" y2="645.0" stroke="#e8e8e8" stroke-width="1.4"/>
<line x1="1718.0" y1="555.0" x2="1718.0" y2="841.0" stroke="#707070" stroke-width="1.3" stroke-dasharray="9,4.5"/>
<rect x="1708.5" y="841.5" width="19" height="9" fill="none" stroke="#e8e8e8" stroke-width="1.3"/>
<line x1="1820.4" y1="552.0" x2="1820.4" y2="645.0" stroke="#00ff00" stroke-width="1.8"/>
<line x1="1831.6" y1="552.0" x2="1831.6" y2="645.0" stroke="#00ff00" stroke-width="1.8"/>
<line x1="1819.0" y1="645.0" x2="1819.0" y2="841.0" stroke="#00ff00" stroke-width="1.8"/>
<line x1="1833.0" y1="645.0" x2="1833.0" y2="841.0" stroke="#00ff00" stroke-width="1.8"/>
<line x1="1818.0" y1="645.0" x2="1834.0" y2="645.0" stroke="#e8e8e8" stroke-width="1.4"/>
<line x1="1826.0" y1="555.0" x2="1826.0" y2="841.0" stroke="#707070" stroke-width="1.3" stroke-dasharray="9,4.5"/>
<rect x="1816.5" y="841.5" width="19" height="9" fill="none" stroke="#e8e8e8" stroke-width="1.3"/>
<line x1="2036.5" y1="470.0" x2="2036.5" y2="841.0" stroke="#00ff00" stroke-width="1.8"/>
<line x1="2050.0" y1="470.0" x2="2050.0" y2="841.0" stroke="#00ff00" stroke-width="1.8"/>
<line x1="2037.0" y1="645.0" x2="2049.0" y2="645.0" stroke="#e8e8e8" stroke-width="1.4"/>
<line x1="2037.0" y1="539.0" x2="2049.0" y2="539.0" stroke="#e8e8e8" stroke-width="1.4"/>
<rect x="2037" y="548" width="7" height="5" fill="none" stroke="#e8e8e8" stroke-width="1.2"/>
<line x1="2043.0" y1="466.0" x2="2043.0" y2="841.0" stroke="#707070" stroke-width="1.3" stroke-dasharray="9,4.5"/>
<rect x="2033.5" y="841.5" width="19" height="9" fill="none" stroke="#e8e8e8" stroke-width="1.3"/>
<line x1="692.0" y1="386.0" x2="692.0" y2="841.0" stroke="#8a8a8a" stroke-width="1.3" stroke-dasharray="30,5,3,5"/>
<line x1="1232.5" y1="386.0" x2="1232.5" y2="841.0" stroke="#8a8a8a" stroke-width="1.3" stroke-dasharray="30,5,3,5"/>
<line x1="1773.0" y1="386.0" x2="1773.0" y2="841.0" stroke="#8a8a8a" stroke-width="1.3" stroke-dasharray="30,5,3,5"/>
<rect x="419" y="549.0" width="1618" height="5" fill="#f4f4f4"/>
<path d="M942.0,550.0h1M536.0,551.4h2M1360.2,552.7h1M479.6,551.0h1M807.7,551.4h1M1754.4,549.9h1M1437.5,551.5h1M1351.0,550.9h1M494.2,552.5h2M1095.9,551.4h2M1323.8,551.9h1M1358.3,551.7h2M576.4,552.0h1M1418.7,551.2h3M1674.2,551.1h3M1003.0,550.4h1M1547.9,550.4h2M1267.2,552.6h3M884.0,552.9h1M1245.8,550.1h2M664.5,551.2h1M1972.7,549.8h2M968.3,550.7h3M1355.5,551.1h1M1944.7,551.2h1M517.0,552.0h3M878.6,550.9h2M455.4,551.1h1M1405.6,551.2h1M1659.7,550.0h1M1061.6,552.7h3M549.1,551.1h2M1845.7,552.4h2M1559.8,553.0h3M1965.7,550.0h1M663.3,551.8h1M1202.2,551.6h2M874.3,550.0h2M1403.8,550.6h1M1534.1,551.3h1M1156.5,552.5h3M1061.9,550.9h3M1443.4,549.7h1M2009.2,551.0h1M968.2,549.7h1M1334.4,551.4h2M1410.2,549.7h1M1410.7,550.0h2M1962.1,551.6h3M617.4,552.5h3M1194.8,550.6h1M584.0,550.7h2M1192.0,551.9h1M750.4,552.8h2M655.8,551.4h1M1643.4,550.5h1M1543.4,550.4h2M1885.8,550.7h1M1279.1,552.2h2M1446.9,551.6h1M1720.8,552.4h1M741.9,551.2h1M2017.2,552.3h3M837.6,551.9h2M1141.3,552.8h2M1961.3,550.8h1M584.0,551.1h2M749.1,551.7h1M1193.3,551.8h1M1767.0,549.9h3M1682.4,552.1h3M1854.8,551.0h2M559.1,552.8h3M1167.0,552.1h1M1589.5,550.1h1M463.5,551.6h3M1721.5,550.0h3M1480.5,550.7h1M453.6,552.3h1M1269.4,552.8h3M2012.3,550.2h1M464.2,550.2h1M1652.3,550.6h3M1766.2,549.7h2M1868.8,551.8h3M1754.8,552.6h1M1277.9,551.3h1M1828.6,552.2h1M1672.3,550.0h1M1183.7,552.0h1M945.5,551.3h3M1685.6,549.9h1M820.3,550.5h1M1239.0,551.5h1M1134.8,551.6h1M1537.8,551.1h3M1239.0,550.4h2M1909.3,552.6h1M1775.6,550.0h1M1052.7,550.6h1M1110.8,550.2h2M1685.1,552.6h1M1936.3,551.8h2M649.9,552.6h3M773.6,552.8h3M1848.2,550.1h1M679.8,551.0h3M966.7,550.2h2M567.9,550.8h2M1313.8,551.0h1M1039.7,551.3h2M1246.3,549.7h1M1988.3,549.9h2M858.2,552.7h1M855.8,550.0h3M1791.1,551.9h2M1074.6,551.4h3M1550.2,549.8h1M1710.3,550.1h1M853.3,549.6h1M1713.6,549.8h1M526.6,552.5h3M437.6,553.0h3M1915.6,550.4h1M488.8,552.0h1M1984.3,550.4h1M744.9,550.6h2M1276.7,550.2h3M1226.6,550.1h2M1716.9,553.0h1M443.8,552.1h1M1249.5,550.4h3M590.6,552.4h3M1479.3,551.4h3M1986.1,550.6h1M2005.6,550.7h1M1072.6,550.7h1M1770.7,549.5h2M1114.6,549.7h3M1824.9,551.8h2M1386.0,551.9h1M1161.0,550.1h3M424.9,550.8h2M1989.8,551.4h1M474.6,552.6h1M994.9,549.5h3M554.5,550.5h1M819.8,552.2h1M845.6,549.8h3M1366.7,550.9h2M910.4,550.3h1M1480.9,552.0h3M1653.4,552.0h3M660.4,552.0h1M489.7,552.4h3M1604.2,552.3h1M1888.5,552.1h1M1753.7,551.5h1M556.4,549.6h2M1968.6,550.8h3M1321.0,551.7h1M1209.2,549.5h1M1627.4,551.3h1M1483.8,549.7h3M826.3,549.8h2M798.2,552.1h1M1613.8,552.9h3M1784.5,549.8h2M1657.7,551.7h1M544.1,550.0h2M1471.2,551.9h1M439.1,549.7h2M1989.6,549.8h1M1510.3,550.5h2M1169.4,551.1h1M2023.2,551.4h2M1998.7,552.8h1M886.7,549.8h3M2024.3,550.9h1M539.5,549.8h2M1957.7,550.0h2M1851.3,552.0h1M1223.1,552.6h3M459.1,549.5h3M1519.8,550.9h1M1091.1,550.8h1M1776.0,549.5h2M1774.2,549.9h1M1570.5,552.7h2M827.9,549.7h3M2032.0,551.6h2M1913.5,552.1h1M872.2,549.7h2M1444.5,550.0h2M1123.5,550.6h2M1687.0,551.0h1M1730.3,551.7h1M1581.1,549.7h3M1147.1,552.1h2M1203.2,552.7h1M694.8,551.0h2M899.9,552.1h2M1075.0,550.3h3M1319.1,550.9h1M1457.8,549.8h3M1307.9,551.1h2M2028.3,551.1h1M1303.7,550.4h1M971.3,549.8h1M1013.8,552.3h1M1851.9,552.1h3M1037.3,552.1h1M1027.6,550.7h1M1223.5,551.5h2M622.3,551.3h1M568.5,552.6h3M1064.6,551.1h2M1789.6,552.6h1M624.5,551.0h3M1982.8,551.2h1M1051.3,552.7h3M1989.2,550.4h1M780.4,550.0h1M1939.5,552.0h3M556.3,552.2h1M1682.4,550.3h1M1461.5,550.6h1M1430.8,551.3h3M1547.2,549.9h1M904.1,552.8h1M1045.8,550.3h1M435.9,550.6h3M868.9,550.6h1M1186.6,550.3h1M466.3,550.9h2M508.3,550.2h3M550.0,550.3h3M1913.1,550.3h1M1542.8,552.0h2M1521.3,550.2h2M1612.7,551.3h1M1219.5,550.2h1M791.8,550.3h2M595.0,551.7h1M1866.8,551.2h1M1951.2,550.0h3M506.8,549.6h1M1089.8,552.0h1M1054.2,552.6h2M1602.3,553.0h1M950.7,550.1h3M470.5,551.8h3M1774.2,552.9h3M692.4,549.5h2M549.4,551.0h1M1325.2,552.2h3M995.0,552.4h3M560.7,552.0h1M1020.9,552.7h1M941.1,552.1h3M467.9,550.9h3M484.6,549.6h1M1716.4,549.7h1M1625.9,552.6h2M1005.2,550.7h1M842.4,552.0h2M1911.6,550.5h1M458.2,550.3h3M1574.6,551.1h3M1694.5,552.7h3M633.3,551.2h1M1715.1,552.1h1M1399.7,550.6h2M1163.2,552.2h1M1245.7,550.9h1M818.4,549.7h1M1196.9,551.4h1M2002.1,552.6h1M846.8,549.8h1M1099.0,553.0h3M698.7,550.0h3M1420.8,551.9h1M1678.3,550.5h2M1334.5,550.8h2M740.7,550.4h1M799.3,550.5h1M946.0,550.9h1M1238.3,550.3h1M1474.1,553.0h1M426.3,552.6h1M1776.5,552.7h1M1835.2,550.3h1M725.2,552.9h1M1921.2,550.8h1M1144.3,550.4h1M589.8,551.6h2M770.5,550.8h1M490.3,553.0h1M1387.1,551.8h1M1734.8,552.4h3M1514.5,550.1h2M544.9,549.6h3M1304.1,549.7h1M1704.3,551.8h1M1451.3,549.8h1M1061.4,550.4h2M1497.5,551.0h1M923.5,551.5h2M1087.7,549.6h2M1459.8,550.9h3M747.9,549.5h1M1103.4,552.4h3M1352.1,550.8h1M628.9,549.7h1M1453.7,552.7h1M1344.2,552.7h1M654.6,550.5h1M1913.7,549.9h3M1636.0,552.3h1M906.1,552.4h1M1994.5,551.2h1M1400.3,551.7h1M1879.3,551.7h1M1453.1,552.5h3M1411.8,550.2h3M714.5,550.3h3M1934.8,550.0h2M617.7,550.4h1M485.4,551.5h1M1497.7,550.6h3M1387.2,551.4h2M1467.2,550.6h1M1106.6,551.8h3M1232.3,550.1h1M1418.5,551.2h1M1140.6,551.7h3M1770.0,552.3h3M591.9,549.9h3M1009.0,552.3h1M484.7,550.0h2M1674.9,551.3h1M1633.6,552.6h1M460.8,549.7h1M731.8,552.9h3M883.9,552.3h1M1527.1,552.0h1M524.8,550.7h2M675.4,552.6h2M1880.7,551.1h2M1230.1,552.7h1M1374.9,551.7h1M934.3,549.6h1M1070.6,551.7h2M1516.7,552.6h1M1698.3,550.4h1M1446.7,550.8h3M1315.6,551.5h1M826.0,551.4h3M1610.7,550.8h3M2018.7,551.5h2M953.3,549.8h1M704.5,552.1h1M897.7,551.3h2M1451.4,552.9h2M1602.9,552.1h1M660.2,551.7h3M1093.6,550.8h1M632.2,550.3h1M455.0,549.5h2M909.5,551.3h1M1086.4,550.6h1M748.8,551.7h3M675.2,549.5h1M1561.6,551.1h1M1449.7,552.5h2M1068.2,550.4h1M509.7,552.4h2M1379.5,551.5h3M820.3,552.7h1M518.4,549.6h1M802.8,549.7h1M438.9,551.4h1M648.8,550.2h3M1732.6,550.1h2M522.0,551.7h3M1574.4,549.5h3M1622.5,551.1h3M702.3,553.0h2M794.2,549.6h2M1858.4,552.7h2M1568.4,550.4h3M1526.5,552.7h2M896.4,552.7h1M557.0,551.3h1M839.5,550.3h1M1944.7,552.1h2M729.0,550.9h1M1031.8,552.5h3M1181.5,551.4h1M1803.9,551.0h1M1340.1,550.6h1M1051.4,551.5h1M652.5,549.6h1M1423.5,550.1h1M1550.7,549.6h1M1537.6,551.7h1M1608.9,549.7h2M740.9,552.8h1M1839.7,552.1h3M592.0,550.2h1M473.7,552.8h1M1751.5,551.7h2M1189.5,550.0h1M894.6,550.7h2M452.8,550.4h2M497.2,552.2h2M1661.3,551.6h3M1794.0,551.7h1M1693.3,549.6h1M979.1,552.0h1M1572.7,552.4h2M694.1,549.5h1M884.7,552.1h1M426.0,551.2h3M1541.8,552.4h3M1376.0,552.9h2M1352.5,550.1h1M1934.3,550.3h1M596.5,551.7h1M1210.8,553.0h1M1433.1,550.7h3M1918.5,552.6h1M1100.7,551.8h2M751.9,550.4h1M1031.6,552.6h1M1943.4,549.9h1M981.8,550.6h1M1820.8,551.1h2M692.8,551.0h2M1354.4,549.9h3M1457.0,551.9h1M851.0,552.1h1M1587.2,552.9h2M1392.7,550.7h1M948.8,550.2h1M684.8,551.8h1M1039.5,552.9h2M1603.3,551.0h1M595.5,552.7h2M752.4,550.9h1M439.4,552.5h3M1538.9,551.3h2M1167.2,550.0h3M427.9,550.3h3M1551.4,551.6h3M1785.3,551.8h1M1516.5,551.7h3M1117.5,550.4h1M1864.0,550.3h3M1570.7,551.7h2M1790.8,551.2h1M1422.8,550.9h1M1863.6,550.6h1M1046.8,551.2h1M480.6,551.4h1M1575.7,552.8h1M1257.5,549.9h3M1292.8,552.0h1M1451.4,552.4h2M1081.7,552.8h1M2018.3,550.1h1M1596.5,551.6h1M826.7,550.8h1M440.5,551.0h3M1434.1,551.9h2M595.5,550.6h3M1937.0,551.3h1M2024.7,552.9h3M761.4,550.0h1M1726.5,551.7h3M1456.2,552.0h1M989.3,551.7h3M1175.0,550.5h1M1678.5,551.1h1M850.9,550.8h2M2006.4,551.9h3M423.4,552.0h2M997.1,551.8h2M1193.5,551.0h1M1483.7,550.8h2M1798.9,549.7h2M1685.2,550.0h2M1441.6,549.6h1M757.7,549.8h2M822.8,549.9h1M1798.5,550.1h3M978.5,550.0h3M1697.6,550.1h1M1498.6,552.6h2M737.8,551.9h1M1617.2,551.0h1M1315.4,550.4h1M1754.7,551.2h1M1201.3,552.7h3M817.2,550.1h1M678.0,550.6h3M1493.5,552.4h2M1106.7,553.0h1M710.5,550.8h1M452.2,549.7h2M1724.9,549.8h3M1201.8,552.6h1M763.6,551.0h1M965.8,552.5h2M970.2,552.2h1M877.9,550.7h2M1313.8,552.4h2M992.6,551.2h2M1232.6,550.5h2M1993.6,551.8h1M953.4,550.6h2M625.0,552.9h1M1685.5,549.6h3M1299.8,549.7h2M594.2,549.7h3M1402.0,551.8h3M1415.0,551.7h1M762.2,551.8h3M1428.8,550.1h1M1822.8,551.0h1M1895.2,551.8h2M1827.2,550.0h2M1326.8,550.4h2M717.4,549.6h1M1114.5,551.7h1M1222.9,551.3h1M1668.7,551.0h3M1140.1,549.5h3M1378.1,553.0h1M1186.8,550.9h1M552.9,551.2h1M1431.4,551.0h1M1523.3,549.9h1M771.5,549.9h3M447.7,552.0h1M1147.0,552.1h1M1009.9,552.1h1M1597.5,549.8h3M1162.8,552.8h2M1894.3,549.7h1M437.4,549.6h1M1047.2,550.6h1M1965.7,552.4h1M929.8,552.8h3M1177.7,550.1h1M1005.7,551.8h3M1189.3,552.2h3M1945.0,552.2h2M891.2,549.7h2M1823.3,552.0h1M1761.5,551.6h2M1363.2,552.9h1M1027.3,551.9h1M1723.1,550.5h1M938.3,550.4h1M1366.4,552.4h1M885.0,550.0h1M861.3,552.5h3M979.2,549.8h3M1706.8,550.2h1M918.8,549.7h3M1170.5,550.2h2M1366.0,549.5h3M1161.4,549.8h2M1666.0,550.3h2M1848.4,551.3h3M1236.5,550.2h1M729.6,550.1h2M1005.0,551.5h3M1678.1,552.5h1M491.0,553.0h2M1818.2,550.8h3M1690.6,550.0h1M976.0,551.3h1M570.9,550.2h3M1366.5,550.2h2M1106.9,552.8h1M829.2,549.6h1M2025.3,550.8h1M501.4,551.5h3M1205.2,552.5h1M1812.7,551.7h1M1559.8,549.8h2M1330.6,551.7h3M714.0,552.5h2M1978.7,553.0h1M697.0,552.8h2M514.7,551.4h1M1771.1,549.7h3M509.1,550.0h1M1936.1,551.9h2M1371.5,551.0h1M1179.2,550.8h3M619.5,551.2h1M1131.8,552.3h1M1174.7,552.7h1M672.5,552.4h1M1927.4,552.5h1M1676.0,552.9h3M1779.2,551.7h3M1989.3,550.6h1M1190.2,551.7h1M955.1,552.1h1M1571.7,551.4h1M1127.9,550.0h3M1084.0,550.0h2M1341.1,550.5h1M840.0,549.9h3M1877.6,549.9h1M1438.1,552.3h1M1323.3,552.4h1M835.3,550.2h2M1116.8,550.4h1M1913.0,549.8h2M1090.3,550.1h2M652.1,551.7h3M1722.3,550.7h1M1134.5,552.3h2M719.1,551.0h3M771.5,551.5h1M1781.0,551.3h1M1568.3,550.2h1M1757.8,552.6h3M1648.5,550.1h1M1408.1,552.0h1M1360.4,550.2h1M1537.0,551.3h1M1256.3,550.7h2M1778.7,552.5h3M564.9,550.9h3M634.3,551.8h1M719.5,552.4h2M478.2,552.0h1M994.2,552.8h1M614.0,552.0h2M1677.3,552.5h1M889.8,549.9h3M1140.0,549.6h1M452.4,552.9h1M1418.8,550.1h2M823.5,552.4h1M450.4,552.7h1M841.2,552.4h3M1263.5,552.0h1M985.4,549.8h1M492.0,549.9h3M1365.2,552.2h1M616.1,550.9h1M1293.7,550.3h1M656.8,551.5h3M684.4,552.4h3M1539.6,551.6h1M1057.9,552.8h2M965.8,550.3h2M1574.6,552.5h2M1735.3,552.5h1M943.7,550.0h2M821.6,551.0h1M1007.6,551.4h1M942.8,550.2h1M783.1,551.0h3M1673.2,552.8h1M1726.0,552.6h1M474.5,551.7h2M1901.5,551.7h1M1422.3,550.4h1M1119.4,552.8h2M601.6,550.7h1M613.4,551.6h2M555.4,551.6h1M1129.6,551.3h2M1897.7,551.5h2M812.1,549.8h2M1775.2,551.6h1M1469.3,550.2h2M1163.3,551.4h3M1176.4,550.6h1M957.9,550.2h3M1984.9,550.9h2M681.1,552.8h2M1318.0,551.2h2M1837.6,550.3h1M1666.0,550.1h1M1397.6,550.7h1M1253.9,552.4h2M1606.7,549.9h1M2016.7,551.9h1M1092.1,551.8h1M1509.7,551.7h2M1745.2,551.3h3M852.9,551.7h1M1086.0,549.9h3M1655.6,551.6h3M1061.0,553.0h1M1093.9,552.2h1M1032.0,551.1h3M884.2,550.7h2M1050.0,551.4h3M1465.8,549.5h3M1033.8,550.6h2M1715.8,551.0h3M1358.3,549.8h2M942.0,552.5h1M1967.4,550.2h3M1858.4,552.8h1M495.6,551.5h3M903.2,551.4h2M1288.7,553.0h3M1048.1,550.8h2M1150.7,549.5h1M1267.3,549.8h2M1228.0,551.8h1M1839.9,552.9h3M1067.6,552.2h2M1535.9,552.1h1M694.7,550.6h1M1753.0,551.3h1M1478.3,550.5h2M1744.2,553.0h3M1438.2,551.3h1M1234.4,550.2h1M516.2,551.5h1M989.4,553.0h1M1536.2,549.5h1M914.4,551.9h1M1900.0,550.9h1M1365.7,551.8h1M701.9,552.2h2M1825.9,552.6h1M1346.8,550.9h1M653.7,551.3h1M465.9,549.8h3M1748.4,551.6h1M1468.9,551.9h2M651.4,550.3h2M692.6,550.4h1M1806.8,552.8h1M982.5,551.1h3M450.6,550.3h3M1360.0,552.9h3M507.2,550.3h1M490.0,552.8h1M927.4,552.6h3M909.4,551.6h3M2001.0,549.7h3M1509.0,551.5h3M918.3,552.6h3M455.2,552.5h1M699.2,550.8h1M431.3,552.6h3M1325.9,549.9h3M961.4,551.8h1M1101.0,552.7h1M1044.6,551.1h2M802.0,549.6h1M970.4,550.0h1M568.6,550.4h1M1315.3,551.1h1M676.1,550.7h3M1027.7,552.9h1M899.1,551.2h1M786.0,551.1h1M1940.5,553.0h3M1367.9,550.8h1M1071.7,551.3h1M1827.9,549.9h1M1295.3,550.4h3M465.4,552.0h1M920.9,550.9h1M1540.9,552.2h1M937.5,551.8h1M529.0,552.7h2M730.4,552.0h1M784.7,549.9h3M875.0,550.9h3M1670.6,552.6h1M1931.8,550.1h2M1516.6,551.8h2M1867.6,549.6h3M820.2,552.5h2M1882.3,549.8h2M605.1,552.7h1M1569.8,549.6h1M1401.8,551.0h2M671.2,552.1h2M1435.6,552.8h1M1339.8,552.0h2M1914.0,551.8h2M1930.1,549.9h2M1874.2,552.6h1M1992.2,551.9h1M1697.2,550.2h2M1629.5,549.8h3M2030.9,551.7h1M873.1,549.8h3M1133.7,550.7h3M1240.5,551.9h1M1110.8,551.3h1M1209.6,550.2h2M700.9,550.1h1M1297.4,550.4h1M690.4,550.7h1M744.3,550.6h1M1527.3,551.2h3M803.2,550.3h3M634.0,551.7h2M634.4,552.0h1M957.7,552.4h3M1647.2,550.1h1M1385.9,551.1h3M1761.3,549.9h2M439.0,551.2h1M516.4,550.5h1M597.6,550.6h1M679.5,551.1h2M886.6,551.5h1M436.5,553.0h3M554.6,552.0h2M594.7,551.2h3M1207.7,552.2h2M432.4,552.7h2M1432.8,552.8h2M1473.7,549.8h1M459.8,550.9h1M897.5,550.2h1M584.0,552.0h2M1617.9,550.6h1M1464.4,550.7h1M1014.2,551.4h2M1772.1,550.4h1M485.6,551.5h3M1880.9,552.8h3M1102.1,552.1h2M1392.2,551.7h1M1530.1,550.1h3M1447.4,550.9h1M1792.8,551.2h1M1586.6,549.5h3M650.2,549.8h1M1250.1,551.0h2M520.3,549.5h1M1879.0,550.1h2M425.8,552.3h2M1335.5,551.1h2M1253.6,551.0h1M1992.6,552.9h1M1729.0,549.7h2M1402.8,550.5h3M1957.8,551.2h1M902.4,550.7h1M1788.7,550.3h3M1535.5,550.0h2M1315.1,552.8h2M1274.9,551.5h3M840.6,550.3h1M1304.2,549.9h2M1468.2,550.2h2M1564.2,550.3h3M784.9,551.5h1M1607.0,552.7h1M1794.2,551.9h3M635.9,551.3h1M1431.0,552.9h1M1161.9,551.9h1M1982.3,550.2h3M1670.6,550.0h1M1072.0,549.7h1M443.5,551.6h1M1161.4,549.9h1M1107.0,552.6h1M1328.2,552.7h2M690.3,552.1h2M1717.6,552.1h1M1752.4,549.9h2M1247.8,551.3h2M1584.7,549.7h2M579.9,551.4h1M474.1,552.7h1M830.2,550.2h3M453.4,553.0h3M602.4,549.6h1M538.1,550.4h1M1314.1,550.5h3M1769.5,551.6h2M1288.6,551.9h2M1951.3,549.5h2M2025.1,551.2h3M1829.0,552.3h1M539.5,551.7h3M1780.4,552.9h3" stroke="#000" stroke-width="0.8" opacity="0.55"/>
<line x1="419.0" y1="554.5" x2="2037.0" y2="554.5" stroke="#00ff00" stroke-width="1.8"/>
<line x1="429.5" y1="567.8" x2="630.7" y2="567.8" stroke="#00ff00" stroke-width="1.8"/>
<line x1="429.5" y1="581.0" x2="441.5" y2="567.8" stroke="#00ff00" stroke-width="1.8"/>
<line x1="630.7" y1="581.0" x2="618.7" y2="567.8" stroke="#00ff00" stroke-width="1.8"/>
<line x1="465.1" y1="554.5" x2="465.1" y2="567.8" stroke="#00ff00" stroke-width="1.2"/>
<path d="M461.9,562.8 L468.3,562.8 L465.1,558.8 Z" fill="#00ff00"/>
<line x1="508.3" y1="554.5" x2="508.3" y2="567.8" stroke="#00ff00" stroke-width="1.2"/>
<path d="M505.1,562.8 L511.5,562.8 L508.3,558.8 Z" fill="#00ff00"/>
<line x1="551.4" y1="554.5" x2="551.4" y2="567.8" stroke="#00ff00" stroke-width="1.2"/>
<path d="M548.2,562.8 L554.6,562.8 L551.4,558.8 Z" fill="#00ff00"/>
<line x1="594.6" y1="554.5" x2="594.6" y2="567.8" stroke="#00ff00" stroke-width="1.2"/>
<path d="M591.4,562.8 L597.8,562.8 L594.6,558.8 Z" fill="#00ff00"/>
<line x1="644.7" y1="567.8" x2="739.0" y2="567.8" stroke="#00ff00" stroke-width="1.8"/>
<line x1="673.8" y1="554.5" x2="673.8" y2="567.8" stroke="#00ff00" stroke-width="1.2"/>
<path d="M670.6,562.8 L677.0,562.8 L673.8,558.8 Z" fill="#00ff00"/>
<line x1="709.9" y1="554.5" x2="709.9" y2="567.8" stroke="#00ff00" stroke-width="1.2"/>
<path d="M706.7,562.8 L713.1,562.8 L709.9,558.8 Z" fill="#00ff00"/>
<line x1="753.0" y1="567.8" x2="954.5" y2="567.8" stroke="#00ff00" stroke-width="1.8"/>
<line x1="753.0" y1="581.0" x2="765.0" y2="567.8" stroke="#00ff00" stroke-width="1.8"/>
<line x1="954.5" y1="581.0" x2="942.5" y2="567.8" stroke="#00ff00" stroke-width="1.8"/>
<line x1="789.2" y1="554.5" x2="789.2" y2="567.8" stroke="#00ff00" stroke-width="1.2"/>
<path d="M786.0,562.8 L792.4,562.8 L789.2,558.8 Z" fill="#00ff00"/>
<line x1="832.4" y1="554.5" x2="832.4" y2="567.8" stroke="#00ff00" stroke-width="1.2"/>
<path d="M829.2,562.8 L835.6,562.8 L832.4,558.8 Z" fill="#00ff00"/>
<line x1="875.6" y1="554.5" x2="875.6" y2="567.8" stroke="#00ff00" stroke-width="1.2"/>
<path d="M872.4,562.8 L878.8,562.8 L875.6,558.8 Z" fill="#00ff00"/>
<line x1="918.8" y1="554.5" x2="918.8" y2="567.8" stroke="#00ff00" stroke-width="1.2"/>
<path d="M915.6,562.8 L922.0,562.8 L918.8,558.8 Z" fill="#00ff00"/>
<line x1="969.5" y1="567.8" x2="1171.0" y2="567.8" stroke="#00ff00" stroke-width="1.8"/>
<line x1="969.5" y1="581.0" x2="981.5" y2="567.8" stroke="#00ff00" stroke-width="1.8"/>
<line x1="1171.0" y1="581.0" x2="1159.0" y2="567.8" stroke="#00ff00" stroke-width="1.8"/>
<line x1="1005.2" y1="554.5" x2="1005.2" y2="567.8" stroke="#00ff00" stroke-width="1.2"/>
<path d="M1002.0,562.8 L1008.4,562.8 L1005.2,558.8 Z" fill="#00ff00"/>
<line x1="1048.4" y1="554.5" x2="1048.4" y2="567.8" stroke="#00ff00" stroke-width="1.2"/>
<path d="M1045.2,562.8 L1051.6,562.8 L1048.4,558.8 Z" fill="#00ff00"/>
<line x1="1091.6" y1="554.5" x2="1091.6" y2="567.8" stroke="#00ff00" stroke-width="1.2"/>
<path d="M1088.4,562.8 L1094.8,562.8 L1091.6,558.8 Z" fill="#00ff00"/>
<line x1="1134.8" y1="554.5" x2="1134.8" y2="567.8" stroke="#00ff00" stroke-width="1.2"/>
<path d="M1131.6,562.8 L1138.0,562.8 L1134.8,558.8 Z" fill="#00ff00"/>
<line x1="1185.0" y1="567.8" x2="1279.0" y2="567.8" stroke="#00ff00" stroke-width="1.8"/>
<line x1="1214.0" y1="554.5" x2="1214.0" y2="567.8" stroke="#00ff00" stroke-width="1.2"/>
<path d="M1210.8,562.8 L1217.2,562.8 L1214.0,558.8 Z" fill="#00ff00"/>
<line x1="1250.0" y1="554.5" x2="1250.0" y2="567.8" stroke="#00ff00" stroke-width="1.2"/>
<path d="M1246.8,562.8 L1253.2,562.8 L1250.0,558.8 Z" fill="#00ff00"/>
<line x1="1293.0" y1="567.8" x2="1494.5" y2="567.8" stroke="#00ff00" stroke-width="1.8"/>
<line x1="1293.0" y1="581.0" x2="1305.0" y2="567.8" stroke="#00ff00" stroke-width="1.8"/>
<line x1="1494.5" y1="581.0" x2="1482.5" y2="567.8" stroke="#00ff00" stroke-width="1.8"/>
<line x1="1329.2" y1="554.5" x2="1329.2" y2="567.8" stroke="#00ff00" stroke-width="1.2"/>
<path d="M1326.0,562.8 L1332.4,562.8 L1329.2,558.8 Z" fill="#00ff00"/>
<line x1="1372.4" y1="554.5" x2="1372.4" y2="567.8" stroke="#00ff00" stroke-width="1.2"/>
<path d="M1369.2,562.8 L1375.6,562.8 L1372.4,558.8 Z" fill="#00ff00"/>
<line x1="1415.6" y1="554.5" x2="1415.6" y2="567.8" stroke="#00ff00" stroke-width="1.2"/>
<path d="M1412.4,562.8 L1418.8,562.8 L1415.6,558.8 Z" fill="#00ff00"/>
<line x1="1458.8" y1="554.5" x2="1458.8" y2="567.8" stroke="#00ff00" stroke-width="1.2"/>
<path d="M1455.6,562.8 L1462.0,562.8 L1458.8,558.8 Z" fill="#00ff00"/>
<line x1="1509.5" y1="567.8" x2="1711.0" y2="567.8" stroke="#00ff00" stroke-width="1.8"/>
<line x1="1509.5" y1="581.0" x2="1521.5" y2="567.8" stroke="#00ff00" stroke-width="1.8"/>
<line x1="1711.0" y1="581.0" x2="1699.0" y2="567.8" stroke="#00ff00" stroke-width="1.8"/>
<line x1="1545.2" y1="554.5" x2="1545.2" y2="567.8" stroke="#00ff00" stroke-width="1.2"/>
<path d="M1542.0,562.8 L1548.4,562.8 L1545.2,558.8 Z" fill="#00ff00"/>
<line x1="1588.4" y1="554.5" x2="1588.4" y2="567.8" stroke="#00ff00" stroke-width="1.2"/>
<path d="M1585.2,562.8 L1591.6,562.8 L1588.4,558.8 Z" fill="#00ff00"/>
<line x1="1631.6" y1="554.5" x2="1631.6" y2="567.8" stroke="#00ff00" stroke-width="1.2"/>
<path d="M1628.4,562.8 L1634.8,562.8 L1631.6,558.8 Z" fill="#00ff00"/>
<line x1="1674.8" y1="554.5" x2="1674.8" y2="567.8" stroke="#00ff00" stroke-width="1.2"/>
<path d="M1671.6,562.8 L1678.0,562.8 L1674.8,558.8 Z" fill="#00ff00"/>
<line x1="1725.0" y1="567.8" x2="1819.0" y2="567.8" stroke="#00ff00" stroke-width="1.8"/>
<line x1="1754.0" y1="554.5" x2="1754.0" y2="567.8" stroke="#00ff00" stroke-width="1.2"/>
<path d="M1750.8,562.8 L1757.2,562.8 L1754.0,558.8 Z" fill="#00ff00"/>
<line x1="1790.0" y1="554.5" x2="1790.0" y2="567.8" stroke="#00ff00" stroke-width="1.2"/>
<path d="M1786.8,562.8 L1793.2,562.8 L1790.0,558.8 Z" fill="#00ff00"/>
<line x1="1833.0" y1="567.8" x2="2036.5" y2="567.8" stroke="#00ff00" stroke-width="1.8"/>
<line x1="1833.0" y1="581.0" x2="1845.0" y2="567.8" stroke="#00ff00" stroke-width="1.8"/>
<line x1="2036.5" y1="581.0" x2="2024.5" y2="567.8" stroke="#00ff00" stroke-width="1.8"/>
<line x1="1869.4" y1="554.5" x2="1869.4" y2="567.8" stroke="#00ff00" stroke-width="1.2"/>
<path d="M1866.2,562.8 L1872.6,562.8 L1869.4,558.8 Z" fill="#00ff00"/>
<line x1="1912.8" y1="554.5" x2="1912.8" y2="567.8" stroke="#00ff00" stroke-width="1.2"/>
<path d="M1909.6,562.8 L1916.0,562.8 L1912.8,558.8 Z" fill="#00ff00"/>
<line x1="1956.2" y1="554.5" x2="1956.2" y2="567.8" stroke="#00ff00" stroke-width="1.2"/>
<path d="M1953.0,562.8 L1959.4,562.8 L1956.2,558.8 Z" fill="#00ff00"/>
<line x1="1999.6" y1="554.5" x2="1999.6" y2="567.8" stroke="#00ff00" stroke-width="1.2"/>
<path d="M1996.4,562.8 L2002.8,562.8 L1999.6,558.8 Z" fill="#00ff00"/>
<line x1="431.5" y1="555.5" x2="431.5" y2="578.0" stroke="#f0e000" stroke-width="1.2" stroke-dasharray="1.5,1.5"/>
<line x1="628.7" y1="555.5" x2="628.7" y2="578.0" stroke="#f0e000" stroke-width="1.2" stroke-dasharray="1.5,1.5"/>
<line x1="646.7" y1="555.5" x2="646.7" y2="578.0" stroke="#f0e000" stroke-width="1.2" stroke-dasharray="1.5,1.5"/>
<line x1="737.0" y1="555.5" x2="737.0" y2="578.0" stroke="#f0e000" stroke-width="1.2" stroke-dasharray="1.5,1.5"/>
<line x1="755.0" y1="555.5" x2="755.0" y2="578.0" stroke="#f0e000" stroke-width="1.2" stroke-dasharray="1.5,1.5"/>
<line x1="952.5" y1="555.5" x2="952.5" y2="578.0" stroke="#f0e000" stroke-width="1.2" stroke-dasharray="1.5,1.5"/>
<line x1="971.5" y1="555.5" x2="971.5" y2="578.0" stroke="#f0e000" stroke-width="1.2" stroke-dasharray="1.5,1.5"/>
<line x1="1169.0" y1="555.5" x2="1169.0" y2="578.0" stroke="#f0e000" stroke-width="1.2" stroke-dasharray="1.5,1.5"/>
<line x1="1187.0" y1="555.5" x2="1187.0" y2="578.0" stroke="#f0e000" stroke-width="1.2" stroke-dasharray="1.5,1.5"/>
<line x1="1277.0" y1="555.5" x2="1277.0" y2="578.0" stroke="#f0e000" stroke-width="1.2" stroke-dasharray="1.5,1.5"/>
<line x1="1295.0" y1="555.5" x2="1295.0" y2="578.0" stroke="#f0e000" stroke-width="1.2" stroke-dasharray="1.5,1.5"/>
<line x1="1492.5" y1="555.5" x2="1492.5" y2="578.0" stroke="#f0e000" stroke-width="1.2" stroke-dasharray="1.5,1.5"/>
<line x1="1511.5" y1="555.5" x2="1511.5" y2="578.0" stroke="#f0e000" stroke-width="1.2" stroke-dasharray="1.5,1.5"/>
<line x1="1709.0" y1="555.5" x2="1709.0" y2="578.0" stroke="#f0e000" stroke-width="1.2" stroke-dasharray="1.5,1.5"/>
<line x1="1727.0" y1="555.5" x2="1727.0" y2="578.0" stroke="#f0e000" stroke-width="1.2" stroke-dasharray="1.5,1.5"/>
<line x1="1817.0" y1="555.5" x2="1817.0" y2="578.0" stroke="#f0e000" stroke-width="1.2" stroke-dasharray="1.5,1.5"/>
<line x1="1835.0" y1="555.5" x2="1835.0" y2="578.0" stroke="#f0e000" stroke-width="1.2" stroke-dasharray="1.5,1.5"/>
<line x1="2034.5" y1="555.5" x2="2034.5" y2="578.0" stroke="#f0e000" stroke-width="1.2" stroke-dasharray="1.5,1.5"/>
<rect x="419" y="655" width="760" height="6" fill="#f0f000"/><rect x="419" y="656.2" width="760" height="3.4" fill="#fcfce8"/>
<rect x="1179" y="655.5" width="858" height="5" fill="#f4f4f4"/>
<path d="M785.1,659.4h1M730.9,656.2h1M818.6,659.5h1M1066.1,656.1h3M1150.8,657.7h1M1868.2,657.4h3M797.2,656.1h2M1259.1,657.7h3M1591.5,658.3h1M2020.4,656.2h3M593.0,656.2h1M1535.5,657.7h1M1358.2,656.5h1M1290.6,656.1h1M658.4,659.0h3M1596.2,659.1h2M1319.1,659.0h3M637.0,658.7h1M1277.9,657.1h2M1953.2,659.0h1M917.7,657.2h2M1242.3,656.2h1M974.9,659.2h2M973.3,656.9h3M830.5,657.0h3M702.0,657.4h1M1925.1,659.0h1M744.9,658.7h2M607.1,658.8h3M971.0,656.6h3M1880.8,656.5h3M1076.6,656.3h1M885.3,656.3h1M1490.1,658.7h2M667.2,659.3h3M1562.7,659.4h1M725.3,659.2h2M1042.9,658.0h2M986.6,659.4h1M1462.0,657.7h1M1832.4,656.1h1M706.1,659.4h3M614.3,656.7h1M1222.0,657.7h1M1034.5,656.4h3M1465.4,658.5h1M1574.5,657.6h3M1737.6,657.6h1M738.0,657.6h1M760.1,656.0h1M1477.2,658.9h1M1999.5,658.6h1M1229.0,657.1h3M1620.5,658.3h1M886.6,657.0h1M1619.4,659.2h3M780.2,657.0h3M1996.5,657.3h2M1252.8,658.2h2M1684.0,657.0h1M735.1,657.3h2M750.5,657.4h3M1779.9,658.4h2M1744.8,658.1h2M1506.0,656.7h1M853.2,656.2h2M2015.8,658.7h2M2012.6,657.0h2M866.9,659.1h3M813.9,656.9h1M1695.1,658.6h1M797.3,658.8h1M1013.2,658.7h1M1045.5,658.3h3M1905.5,658.8h1M454.7,656.7h2M559.6,657.6h2M1913.4,656.3h2M1816.0,658.3h2M1695.8,658.9h1M1806.4,658.3h2M2025.8,656.3h1M1589.4,658.1h2M778.1,658.6h2M525.8,659.2h2M1120.8,656.5h3M659.2,658.5h1M580.1,656.8h2M1912.9,657.2h1M595.1,656.2h1M1751.5,658.0h2M896.1,656.8h3M598.2,658.5h1M2029.7,659.3h1M783.0,656.8h1M691.9,658.7h1M1541.2,657.6h2M1089.0,659.3h2M1536.8,659.4h3M1821.7,658.6h1M917.7,658.4h3M1764.3,658.9h2M1226.4,659.4h2M1722.2,658.0h3M1657.3,658.9h3M619.7,657.4h1M1822.3,657.8h2M979.5,658.4h1M1759.9,656.1h1M1144.0,659.3h3M1330.0,658.0h1M1020.9,657.8h2M2011.1,657.3h2M1469.1,657.7h1M1462.6,657.7h2M1925.3,658.6h3M1024.5,658.2h1M1605.2,659.3h2M517.4,659.4h2M1200.0,657.7h1M906.3,658.3h1M1683.9,658.6h2M1152.7,657.0h3M1808.0,657.6h1M1225.3,658.3h2M638.3,659.4h1M1002.6,658.1h3M1003.2,658.0h1M1301.8,658.5h1M1681.9,657.8h1M561.9,658.8h2M770.5,658.2h2M1949.6,658.8h1M441.5,657.6h1M930.0,656.1h1M1607.8,658.6h2M1453.6,656.0h1M950.4,659.0h3M797.7,659.0h1M1252.8,656.7h3M1881.8,657.5h1M539.4,658.3h2M1931.0,657.5h1M827.6,658.4h1M2018.5,657.0h3M927.9,656.6h1M1060.0,658.4h2M916.0,657.0h1M1074.8,656.7h1M724.2,658.8h3M670.8,658.9h1M1474.4,656.3h2M1861.2,658.9h3M1887.1,659.0h2M1416.4,658.2h3M575.3,657.8h2M1404.7,656.6h1M1940.2,657.5h1M964.5,656.4h2M535.4,657.1h1M1486.3,658.5h3M1775.5,659.2h3M993.4,657.1h1M1042.6,659.0h3M1083.2,656.0h2M1303.9,659.1h1M445.4,656.1h2M1020.6,657.7h1M1406.4,656.4h3M864.7,657.9h1M820.1,659.2h1M960.6,657.3h2M1912.5,658.1h3M1608.4,657.0h1M1190.2,657.6h1M1839.8,657.9h1M1249.0,657.8h3M1936.7,657.8h1M2007.1,658.0h1M1898.0,658.6h3M1426.9,657.6h1M900.3,658.6h2M989.3,656.2h3M1398.9,657.0h1M1310.3,658.5h3M1126.9,658.5h1M1189.3,656.2h1M1435.4,657.0h1M1056.7,657.9h1M716.6,657.7h1M1559.2,657.5h3M466.8,657.2h1M1270.2,657.7h1M1360.9,657.6h2M830.3,659.2h1M731.2,657.7h3M581.3,659.0h1M988.2,657.4h2M1501.3,659.2h3M1379.4,658.7h3M1959.6,658.2h1M1674.2,658.5h1M1135.9,657.0h1M761.1,657.8h2M2009.5,657.3h1M1234.9,658.0h3M1939.7,657.1h1M1027.2,656.0h1M1875.4,656.8h1M1459.0,657.7h3M561.3,658.5h1M1040.2,659.2h3M959.4,658.6h2M1876.0,656.2h1M452.5,659.2h2M1468.8,657.5h2M2028.7,658.5h1M1469.5,656.6h1M1299.7,659.3h1M1232.4,656.2h1M934.1,656.9h2M1783.0,657.2h2M1772.9,656.8h1M1241.0,657.0h3M467.5,656.1h3M929.8,657.8h1M1997.3,659.3h2M1246.4,658.7h1M1805.8,657.1h2M677.0,658.4h1M1271.5,658.2h2M1312.5,657.1h1M462.8,658.4h1M989.5,657.6h2M978.3,659.4h2M1569.7,658.4h2M1157.5,659.5h1M1641.6,659.1h2M1751.3,657.9h1M1821.7,657.2h1M860.6,656.0h3M1539.5,659.4h1M1791.2,658.4h1M1720.2,658.0h2M1771.4,658.0h1M1668.3,657.9h1M1209.6,658.6h3M1584.3,658.8h3M1212.0,658.6h1M1777.2,657.9h3M1851.3,657.7h3M1391.4,656.2h1M1717.0,658.0h3M1089.9,656.8h2M1712.0,656.0h2M800.6,657.4h2M1783.5,657.2h3M1424.9,659.0h1M998.2,656.6h1M1639.1,656.7h1M1955.8,658.3h1M1330.9,659.1h1M1489.9,657.0h1M1531.6,656.3h1M1404.0,657.8h2M1672.5,658.3h1M1481.2,656.2h1M979.3,657.2h2M640.3,659.3h1M1835.2,658.2h1M1637.1,656.0h3M1175.0,657.3h1M1491.7,657.3h3M960.0,659.2h3M634.5,659.4h1M540.4,657.2h3M507.5,657.0h2M1750.4,659.1h3M514.5,656.0h1M1471.1,656.8h1M1703.0,658.9h3M1413.2,658.1h1M1954.0,657.7h1M1712.0,657.9h2M500.1,659.2h1M856.3,657.8h2M1168.4,656.8h1M533.8,657.5h1M1787.2,657.5h2M1821.9,658.5h1M641.7,658.6h3M1526.0,659.0h3M1027.2,658.4h1M1758.8,657.2h2M1096.6,657.0h3M419.4,656.9h2M540.5,657.9h1M1709.6,656.1h1M594.3,659.2h3M1140.6,656.7h2M1324.8,657.1h3M670.6,658.2h2M1779.3,657.0h1M1987.4,658.7h1M1593.2,656.4h1M1535.6,657.9h1M1750.4,659.1h1M703.9,656.9h3M1843.7,656.6h1M1521.1,657.1h3M1531.3,656.6h1M1680.4,657.6h1M992.9,657.6h3M864.3,656.1h2M1449.0,659.1h1M1667.2,657.4h1M1094.0,656.1h1M1973.7,656.5h3M1446.0,656.5h3M628.8,657.6h3M853.7,658.9h2M973.8,656.7h1M1051.7,656.7h2M900.5,656.6h2M1361.2,658.2h3M1111.7,659.4h1M1840.2,659.0h2M908.6,658.5h1M1333.0,658.4h3M1931.3,658.7h1M1690.4,656.3h1M1652.0,656.3h1M623.2,657.9h1M1484.6,659.3h1M1226.2,658.7h2M1337.1,657.4h1M1062.9,657.5h2M451.7,656.8h2M1158.9,656.3h1M486.6,657.6h1M932.1,657.2h1M632.1,659.3h1M552.9,657.8h3M540.4,658.9h1M984.9,656.2h3M719.4,656.4h3M1438.6,658.8h2M1681.6,657.2h1M1746.8,657.9h1M748.7,657.7h2M1257.0,658.6h1M1363.6,658.1h3M1218.8,657.9h3M1986.3,658.1h2M1880.8,657.3h1M1458.6,659.0h1M1617.7,657.5h1M765.4,658.4h1M1048.1,657.0h2M2021.6,659.2h1M1704.2,659.2h2M1344.3,656.0h1M1153.0,656.6h3M2002.9,656.9h3M1754.5,658.2h2M525.2,657.9h3M668.5,659.1h3M1080.8,656.5h1M1716.8,659.2h3M1471.4,657.4h2M1270.0,658.6h1M656.9,658.9h1M886.4,658.1h1M1247.8,656.6h3M746.7,656.2h1M804.5,659.3h2M991.4,658.5h3M524.4,656.6h2M575.0,657.4h1M1390.9,659.4h1M1715.8,658.4h1M979.7,658.2h1M1027.8,656.3h2M1853.9,658.3h3M1853.6,658.4h1M663.5,658.0h2M678.8,659.1h2M449.1,658.0h3M1031.7,658.5h2M1566.7,659.1h1M1341.1,658.5h1M835.7,656.8h2M525.9,659.2h1M1323.2,656.1h2M1197.2,659.4h3M680.1,658.2h1M1268.9,657.5h2M1507.3,657.7h1M1802.4,658.6h2M1844.4,657.0h2M1266.2,658.5h2M1725.7,658.6h1M794.8,658.4h1M919.4,658.7h2M1568.9,656.3h1M1407.5,657.4h1M1052.2,659.0h1M527.4,657.9h1M636.7,658.7h1M1997.7,656.1h2M1720.0,656.1h3M871.2,658.3h2M715.7,656.1h2M723.6,657.0h2M1553.3,659.2h1M1968.8,656.7h2M1637.7,656.5h1M1228.6,658.3h3M682.7,658.5h1M1003.6,657.6h1M1627.6,657.6h1M1405.0,658.9h2M1530.7,659.0h1M1826.1,659.4h3M1318.3,659.4h2M1992.4,657.6h1M1529.3,658.5h1M1652.2,656.8h1M1668.8,656.9h3M1663.4,658.8h3M653.0,656.3h1M1882.4,658.4h1M790.0,658.6h3M841.1,656.2h2M1781.4,656.8h2M955.1,657.9h3M973.4,657.0h1M2012.6,656.1h1M1485.6,656.6h1M1235.0,658.0h1M809.1,657.8h1M1680.3,657.4h2M1290.9,656.2h2M1304.6,656.3h3M585.5,657.0h3M1905.2,657.8h2M1668.4,659.3h1M1348.0,657.0h1M1307.9,656.3h1M1661.4,657.7h1M1707.5,659.0h3M559.6,657.8h1M1804.7,659.3h1M1667.7,656.3h2M1273.4,659.3h1M1902.7,658.9h1M920.2,659.5h2M825.5,658.1h3M562.4,656.3h3M712.4,656.5h1M709.8,658.6h1M1340.1,656.6h1M961.5,658.1h1M590.8,658.6h2M1614.2,658.9h1M436.3,656.9h2M1106.1,659.1h3M1548.7,658.6h2M555.5,657.3h1M1608.0,656.1h1M1031.1,658.7h1M476.4,658.6h1M1674.9,656.4h1M1760.2,659.3h2M703.5,656.7h1M1867.4,657.6h2M1561.5,657.0h1M1307.9,657.8h3M2016.5,656.0h2M823.5,656.5h1M1679.1,657.2h3M1347.8,659.2h3M1165.4,657.3h1M1534.7,658.5h2M945.2,657.1h2M1549.2,658.5h3M919.4,657.7h2M1625.3,659.4h1M1305.9,656.4h2M1065.7,659.2h3M1588.4,656.7h3M1987.7,659.5h2M738.6,659.1h1M817.7,657.0h3M1541.7,658.9h1M1996.7,658.0h1M594.4,656.2h2M1016.6,656.8h2M1361.9,656.9h2M1766.3,657.0h1M522.5,658.0h1M1789.1,658.1h3M1523.2,658.0h3M545.6,658.8h1M687.7,658.7h1M803.0,657.9h2M1235.5,656.4h1M1517.7,657.3h1M1694.2,658.1h3M1641.4,657.9h1M658.5,658.4h1M2002.8,658.0h1M940.7,658.8h2M1992.9,656.8h1M1157.3,657.0h2M1457.3,657.7h3M2018.3,656.5h3M1876.5,658.7h1M1311.4,657.5h2M1444.2,656.5h2M1858.8,656.5h3M858.2,657.8h1M459.9,658.6h1M1135.8,657.8h2M865.9,659.4h2M866.6,657.8h3M1097.7,656.1h1M1387.2,658.5h1M1935.0,657.3h1M1480.1,658.0h3M551.6,657.3h3M1270.1,659.2h1M1328.0,658.5h1M1243.3,656.4h1M1386.6,657.2h1M1661.6,659.0h1M1092.1,657.6h2M1252.0,657.4h1M479.8,658.9h3M1776.5,657.2h1M1553.1,657.9h1M887.9,657.0h1M846.4,659.0h2M1194.4,658.5h1M1935.9,659.0h2M443.7,657.9h2M1777.4,656.0h2M720.5,658.5h1M1682.5,656.3h2M1025.5,656.4h2M1113.3,657.7h1M1657.6,659.3h1M1031.5,657.4h2M1768.5,657.0h1M1164.2,658.6h1M999.0,658.1h2M1823.9,657.6h2M635.6,657.9h1M1308.2,658.5h1M522.9,657.8h1M1435.2,658.7h3M1861.0,659.0h1M1589.0,657.9h2M1833.6,657.7h3M1867.4,656.5h2M1400.7,659.2h2M831.3,658.8h3M461.9,656.5h1M903.9,656.4h2M1905.4,659.3h3M888.2,656.8h3M1373.6,658.1h3M849.3,656.9h2M1531.9,658.5h2M1006.5,657.8h1M497.4,658.9h2M1000.9,656.5h1M1733.2,656.6h1M930.3,656.3h2M1865.7,656.7h3M1854.8,657.8h2M1732.3,656.5h1M1126.0,658.8h1M1165.3,659.1h3M2027.9,659.2h1M1116.8,657.6h3M1418.7,656.8h2M2032.9,658.2h1M990.2,658.0h1M1877.3,658.1h3M1869.2,657.0h3M1554.5,657.5h3M942.9,658.5h1M530.1,658.3h2M1953.7,658.0h3M558.1,659.1h1M951.1,658.9h1M943.4,657.3h1M1630.3,659.2h2M1403.1,656.7h1M1017.4,657.6h1M477.9,657.6h3M1197.1,657.5h2M1612.5,656.4h1M554.5,658.2h3M608.2,659.3h1M443.7,658.7h1M995.5,656.3h1M549.5,658.8h1M1052.3,658.2h2M1486.5,656.1h1M1591.0,658.9h3M786.6,657.1h1M1700.9,657.9h1M1459.2,659.4h2M1310.6,656.8h2M1965.1,658.6h3M568.9,659.4h2M1883.9,657.7h1M1502.9,657.7h1M669.0,656.9h1M478.8,656.0h2M1702.2,656.9h1M1464.8,657.2h1M1848.3,657.6h2M1446.0,656.9h2M1683.1,657.5h1M1154.2,658.2h3M951.5,659.4h1M1266.2,659.4h1M1237.6,656.1h1M1384.3,659.0h2M1871.4,656.2h3M731.6,657.0h3M1229.8,656.4h1M1363.7,657.9h1M1761.1,657.2h1M1011.5,658.8h2M1975.1,658.5h1M1195.7,658.0h1M1095.5,658.4h1M2007.7,657.6h1M881.5,656.6h1M627.3,656.3h2M1470.4,658.1h3M704.3,657.0h2M1274.6,659.3h2M1141.5,656.8h3M1152.5,657.7h3M1789.3,659.1h1M1644.9,656.6h2M649.9,658.9h2M1123.8,657.8h2M582.2,656.4h3M717.1,659.0h3M526.3,658.9h1M1060.8,657.7h3M983.8,656.1h1M941.7,657.3h2M1329.0,657.4h3M1656.5,657.0h1M788.6,659.0h3M1557.2,657.4h1M1020.8,657.1h3M1700.6,656.6h3M803.2,656.0h3M1656.1,658.7h2M1218.3,659.4h1M562.1,657.0h1M652.5,657.5h1M1780.5,657.1h3M1925.4,657.8h3M1436.0,658.5h2M1549.3,656.5h2M1304.5,658.1h3M2028.2,656.4h2M1489.2,656.6h1M878.2,658.6h2M759.7,657.4h1M796.0,656.5h2M1837.4,656.3h2M797.4,657.8h1M1594.5,657.5h1M1191.7,659.1h1M796.6,658.0h3M608.0,657.0h2M1267.5,656.3h1M1084.1,658.0h1M988.3,659.3h1M1509.8,658.8h2M1377.8,656.2h2M1771.0,657.3h1M1529.9,659.3h3M1263.9,659.4h3M701.8,657.3h3M736.7,658.3h1M889.7,656.2h1M683.1,659.4h3M1411.1,658.0h1M708.8,656.1h1M1811.9,657.9h1M790.9,656.8h1M1214.1,657.5h2M1668.6,659.1h2M629.5,656.7h1M820.3,656.3h1M1995.5,658.5h2M1666.9,657.6h1M1257.6,657.3h1M753.1,656.8h3M1617.1,657.9h2M716.1,658.3h1M808.9,657.2h2M1162.8,659.3h1M1379.0,659.4h1M566.7,657.7h2M856.7,657.9h2M1306.2,658.3h2M1531.5,659.3h1M717.4,658.3h2M1280.2,658.1h2M1733.2,656.2h2M1204.2,656.2h1M984.5,659.1h1M1815.0,656.7h1M736.9,658.3h1M1319.5,659.4h3M741.6,659.0h1M1795.3,657.3h3M627.2,656.8h3M1642.5,657.9h1M817.2,658.3h3M1457.5,659.0h1M909.6,656.5h1M1025.5,658.5h1M751.9,656.6h1M1243.4,658.5h3M1200.0,656.3h1M838.5,659.5h1M1372.0,656.8h1M945.5,658.1h1M1579.9,658.4h2M1542.9,658.0h2M965.7,658.7h2M890.0,656.1h1M420.2,658.7h3M1813.5,659.3h3M1687.8,659.5h1M548.3,658.9h1M1419.3,657.3h2M1265.4,657.3h1M455.3,656.1h3M1988.1,656.4h3M874.9,657.2h1M1550.1,658.5h1M464.8,657.9h3M1258.2,658.1h3M1214.4,659.2h2M1002.0,659.1h3M1449.3,658.6h1M1046.9,658.0h3M1713.8,658.9h1M1906.4,656.4h1M1553.7,656.3h3M464.4,658.1h1M791.2,658.2h3M845.7,659.3h2M1860.2,658.6h2M1899.1,658.1h2M1847.9,656.7h3M1151.9,657.0h3M1489.5,657.6h1M1671.0,656.2h3M1046.8,656.3h1M1765.3,656.0h3M787.3,657.2h3M618.7,656.1h3M1664.2,656.6h2M1228.1,656.1h2M716.6,656.1h3M1972.5,656.4h1M1776.9,656.7h3M1765.2,658.0h2M1457.8,659.4h1M1342.8,656.6h1M1212.7,658.7h3M1566.9,658.0h2M864.8,656.3h2M1041.5,658.1h2M1688.4,657.5h1M690.2,656.8h2M1871.4,658.6h3M879.3,658.3h1M977.1,657.3h1M715.6,656.4h2M751.8,659.5h1M1138.5,659.3h1M1160.4,656.5h2M952.0,657.6h2M1705.4,657.6h2M1338.2,656.5h3M708.3,658.5h2M1309.7,658.5h1M1347.1,657.4h1M1739.6,658.0h1M1907.4,656.9h1M1441.4,659.5h1M1485.4,658.1h2M788.7,657.4h1M1605.5,659.3h1M728.2,657.3h1M1094.8,657.3h1M864.9,659.5h3M1498.4,658.8h1M1466.8,656.8h2M812.2,658.0h1M1086.9,657.7h2M630.6,658.3h1M1956.1,657.6h2M1593.0,656.6h1M1475.9,658.9h3M1596.0,656.4h2M1338.7,658.7h1M1406.2,657.5h1M1451.7,657.0h1M1013.3,659.2h1M1297.3,657.1h1M1821.2,659.4h1M436.4,657.5h1M1338.4,657.4h1M696.1,656.6h2M1750.4,656.1h1M1610.4,657.7h3M954.7,658.5h1M1954.3,658.3h2M433.2,659.3h3M1659.0,656.5h3M735.1,656.8h3M1325.6,658.4h3M1826.3,657.3h3M559.9,658.3h1M1565.8,656.4h2M1736.2,656.5h1M2016.4,656.8h3M474.0,656.2h1M1515.0,656.0h1M1087.1,656.7h1M1849.9,657.8h1M1922.0,657.8h1M1839.1,656.7h1M1884.4,659.4h1M1025.2,656.0h1M1591.2,659.2h1M1982.0,656.4h1M1871.4,656.0h2M607.3,657.9h2M1882.9,658.6h1M529.0,659.2h2M1431.2,658.9h2M1676.3,657.6h3M1266.9,656.4h1M788.3,656.3h3M1992.1,658.3h3M1354.4,656.3h2M1425.9,658.0h1M1738.6,659.2h2M556.9,656.5h1M1516.2,656.7h2M534.7,656.3h1M1818.4,659.4h1M1773.3,657.1h2M1179.4,658.2h1M1439.0,658.0h2M849.2,658.4h2M682.0,657.0h2M1872.1,659.1h1M1492.7,659.0h1M1389.7,657.2h1M1740.1,657.1h1M1064.3,656.1h1M1559.2,659.0h1M1275.4,658.9h1M1505.2,657.8h1M1925.5,657.7h1M1555.9,656.1h3M693.6,656.3h1M1407.0,659.4h3M1463.7,658.6h1M1487.7,656.6h1M1726.4,656.6h1M954.6,656.5h3M1605.7,659.0h1M1110.0,656.0h2M1654.7,658.1h3M1757.7,659.5h1M1310.0,656.4h3M791.9,659.1h1M652.3,657.1h1M1144.0,659.3h3M759.6,659.0h1" stroke="#000" stroke-width="0.8" opacity="0.55"/>
<line x1="419.0" y1="661.0" x2="2037.0" y2="661.0" stroke="#00ff00" stroke-width="1.8"/>
<line x1="429.5" y1="673.5" x2="630.7" y2="673.5" stroke="#00ff00" stroke-width="1.8"/>
<line x1="429.5" y1="686.0" x2="441.5" y2="673.5" stroke="#00ff00" stroke-width="1.8"/>
<line x1="630.7" y1="686.0" x2="618.7" y2="673.5" stroke="#00ff00" stroke-width="1.8"/>
<line x1="465.1" y1="661.0" x2="465.1" y2="673.5" stroke="#00ff00" stroke-width="1.2"/>
<path d="M461.9,668.5 L468.3,668.5 L465.1,664.5 Z" fill="#00ff00"/>
<line x1="508.3" y1="661.0" x2="508.3" y2="673.5" stroke="#00ff00" stroke-width="1.2"/>
<path d="M505.1,668.5 L511.5,668.5 L508.3,664.5 Z" fill="#00ff00"/>
<line x1="551.4" y1="661.0" x2="551.4" y2="673.5" stroke="#00ff00" stroke-width="1.2"/>
<path d="M548.2,668.5 L554.6,668.5 L551.4,664.5 Z" fill="#00ff00"/>
<line x1="594.6" y1="661.0" x2="594.6" y2="673.5" stroke="#00ff00" stroke-width="1.2"/>
<path d="M591.4,668.5 L597.8,668.5 L594.6,664.5 Z" fill="#00ff00"/>
<line x1="644.7" y1="673.5" x2="739.0" y2="673.5" stroke="#00ff00" stroke-width="1.8"/>
<line x1="673.8" y1="661.0" x2="673.8" y2="673.5" stroke="#00ff00" stroke-width="1.2"/>
<path d="M670.6,668.5 L677.0,668.5 L673.8,664.5 Z" fill="#00ff00"/>
<line x1="709.9" y1="661.0" x2="709.9" y2="673.5" stroke="#00ff00" stroke-width="1.2"/>
<path d="M706.7,668.5 L713.1,668.5 L709.9,664.5 Z" fill="#00ff00"/>
<line x1="753.0" y1="673.5" x2="954.5" y2="673.5" stroke="#00ff00" stroke-width="1.8"/>
<line x1="753.0" y1="686.0" x2="765.0" y2="673.5" stroke="#00ff00" stroke-width="1.8"/>
<line x1="954.5" y1="686.0" x2="942.5" y2="673.5" stroke="#f0e000" stroke-width="1.8"/>
<line x1="789.2" y1="661.0" x2="789.2" y2="673.5" stroke="#00ff00" stroke-width="1.2"/>
<path d="M786.0,668.5 L792.4,668.5 L789.2,664.5 Z" fill="#00ff00"/>
<line x1="832.4" y1="661.0" x2="832.4" y2="673.5" stroke="#00ff00" stroke-width="1.2"/>
<path d="M829.2,668.5 L835.6,668.5 L832.4,664.5 Z" fill="#00ff00"/>
<line x1="875.6" y1="661.0" x2="875.6" y2="673.5" stroke="#00ff00" stroke-width="1.2"/>
<path d="M872.4,668.5 L878.8,668.5 L875.6,664.5 Z" fill="#00ff00"/>
<line x1="918.8" y1="661.0" x2="918.8" y2="673.5" stroke="#00ff00" stroke-width="1.2"/>
<path d="M915.6,668.5 L922.0,668.5 L918.8,664.5 Z" fill="#00ff00"/>
<line x1="969.5" y1="673.5" x2="1171.0" y2="673.5" stroke="#00ff00" stroke-width="1.8"/>
<line x1="969.5" y1="686.0" x2="981.5" y2="673.5" stroke="#00ff00" stroke-width="1.8"/>
<line x1="1171.0" y1="686.0" x2="1159.0" y2="673.5" stroke="#00ff00" stroke-width="1.8"/>
<line x1="1005.2" y1="661.0" x2="1005.2" y2="673.5" stroke="#00ff00" stroke-width="1.2"/>
<path d="M1002.0,668.5 L1008.4,668.5 L1005.2,664.5 Z" fill="#00ff00"/>
<line x1="1048.4" y1="661.0" x2="1048.4" y2="673.5" stroke="#00ff00" stroke-width="1.2"/>
<path d="M1045.2,668.5 L1051.6,668.5 L1048.4,664.5 Z" fill="#00ff00"/>
<line x1="1091.6" y1="661.0" x2="1091.6" y2="673.5" stroke="#00ff00" stroke-width="1.2"/>
<path d="M1088.4,668.5 L1094.8,668.5 L1091.6,664.5 Z" fill="#00ff00"/>
<line x1="1134.8" y1="661.0" x2="1134.8" y2="673.5" stroke="#00ff00" stroke-width="1.2"/>
<path d="M1131.6,668.5 L1138.0,668.5 L1134.8,664.5 Z" fill="#00ff00"/>
<line x1="1185.0" y1="673.5" x2="1279.0" y2="673.5" stroke="#00ff00" stroke-width="1.8"/>
<line x1="1214.0" y1="661.0" x2="1214.0" y2="673.5" stroke="#00ff00" stroke-width="1.2"/>
<path d="M1210.8,668.5 L1217.2,668.5 L1214.0,664.5 Z" fill="#00ff00"/>
<line x1="1250.0" y1="661.0" x2="1250.0" y2="673.5" stroke="#00ff00" stroke-width="1.2"/>
<path d="M1246.8,668.5 L1253.2,668.5 L1250.0,664.5 Z" fill="#00ff00"/>
<line x1="1293.0" y1="673.5" x2="1494.5" y2="673.5" stroke="#00ff00" stroke-width="1.8"/>
<line x1="1293.0" y1="686.0" x2="1305.0" y2="673.5" stroke="#00ff00" stroke-width="1.8"/>
<line x1="1494.5" y1="686.0" x2="1482.5" y2="673.5" stroke="#00ff00" stroke-width="1.8"/>
<line x1="1329.2" y1="661.0" x2="1329.2" y2="673.5" stroke="#00ff00" stroke-width="1.2"/>
<path d="M1326.0,668.5 L1332.4,668.5 L1329.2,664.5 Z" fill="#00ff00"/>
<line x1="1372.4" y1="661.0" x2="1372.4" y2="673.5" stroke="#00ff00" stroke-width="1.2"/>
<path d="M1369.2,668.5 L1375.6,668.5 L1372.4,664.5 Z" fill="#00ff00"/>
<line x1="1415.6" y1="661.0" x2="1415.6" y2="673.5" stroke="#00ff00" stroke-width="1.2"/>
<path d="M1412.4,668.5 L1418.8,668.5 L1415.6,664.5 Z" fill="#00ff00"/>
<line x1="1458.8" y1="661.0" x2="1458.8" y2="673.5" stroke="#00ff00" stroke-width="1.2"/>
<path d="M1455.6,668.5 L1462.0,668.5 L1458.8,664.5 Z" fill="#00ff00"/>
<line x1="1509.5" y1="673.5" x2="1711.0" y2="673.5" stroke="#00ff00" stroke-width="1.8"/>
<line x1="1509.5" y1="686.0" x2="1521.5" y2="673.5" stroke="#00ff00" stroke-width="1.8"/>
<line x1="1711.0" y1="686.0" x2="1699.0" y2="673.5" stroke="#00ff00" stroke-width="1.8"/>
<line x1="1545.2" y1="661.0" x2="1545.2" y2="673.5" stroke="#00ff00" stroke-width="1.2"/>
<path d="M1542.0,668.5 L1548.4,668.5 L1545.2,664.5 Z" fill="#00ff00"/>
<line x1="1588.4" y1="661.0" x2="1588.4" y2="673.5" stroke="#00ff00" stroke-width="1.2"/>
<path d="M1585.2,668.5 L1591.6,668.5 L1588.4,664.5 Z" fill="#00ff00"/>
<line x1="1631.6" y1="661.0" x2="1631.6" y2="673.5" stroke="#00ff00" stroke-width="1.2"/>
<path d="M1628.4,668.5 L1634.8,668.5 L1631.6,664.5 Z" fill="#00ff00"/>
<line x1="1674.8" y1="661.0" x2="1674.8" y2="673.5" stroke="#00ff00" stroke-width="1.2"/>
<path d="M1671.6,668.5 L1678.0,668.5 L1674.8,664.5 Z" fill="#00ff00"/>
<line x1="1725.0" y1="673.5" x2="1819.0" y2="673.5" stroke="#00ff00" stroke-width="1.8"/>
<line x1="1754.0" y1="661.0" x2="1754.0" y2="673.5" stroke="#00ff00" stroke-width="1.2"/>
<path d="M1750.8,668.5 L1757.2,668.5 L1754.0,664.5 Z" fill="#00ff00"/>
<line x1="1790.0" y1="661.0" x2="1790.0" y2="673.5" stroke="#00ff00" stroke-width="1.2"/>
<path d="M1786.8,668.5 L1793.2,668.5 L1790.0,664.5 Z" fill="#00ff00"/>
<line x1="1833.0" y1="673.5" x2="2036.5" y2="673.5" stroke="#00ff00" stroke-width="1.8"/>
<line x1="1833.0" y1="686.0" x2="1845.0" y2="673.5" stroke="#00ff00" stroke-width="1.8"/>
<line x1="2036.5" y1="686.0" x2="2024.5" y2="673.5" stroke="#00ff00" stroke-width="1.8"/>
<line x1="1869.4" y1="661.0" x2="1869.4" y2="673.5" stroke="#00ff00" stroke-width="1.2"/>
<path d="M1866.2,668.5 L1872.6,668.5 L1869.4,664.5 Z" fill="#00ff00"/>
<line x1="1912.8" y1="661.0" x2="1912.8" y2="673.5" stroke="#00ff00" stroke-width="1.2"/>
<path d="M1909.6,668.5 L1916.0,668.5 L1912.8,664.5 Z" fill="#00ff00"/>
<line x1="1956.2" y1="661.0" x2="1956.2" y2="673.5" stroke="#00ff00" stroke-width="1.2"/>
<path d="M1953.0,668.5 L1959.4,668.5 L1956.2,664.5 Z" fill="#00ff00"/>
<line x1="1999.6" y1="661.0" x2="1999.6" y2="673.5" stroke="#00ff00" stroke-width="1.2"/>
<path d="M1996.4,668.5 L2002.8,668.5 L1999.6,664.5 Z" fill="#00ff00"/>
<line x1="431.5" y1="662.0" x2="431.5" y2="683.0" stroke="#f0e000" stroke-width="1.2" stroke-dasharray="1.5,1.5"/>
<line x1="628.7" y1="662.0" x2="628.7" y2="683.0" stroke="#f0e000" stroke-width="1.2" stroke-dasharray="1.5,1.5"/>
<line x1="646.7" y1="662.0" x2="646.7" y2="683.0" stroke="#f0e000" stroke-width="1.2" stroke-dasharray="1.5,1.5"/>
<line x1="737.0" y1="662.0" x2="737.0" y2="683.0" stroke="#f0e000" stroke-width="1.2" stroke-dasharray="1.5,1.5"/>
<line x1="755.0" y1="662.0" x2="755.0" y2="683.0" stroke="#f0e000" stroke-width="1.2" stroke-dasharray="1.5,1.5"/>
<line x1="952.5" y1="662.0" x2="952.5" y2="683.0" stroke="#f0e000" stroke-width="1.2" stroke-dasharray="1.5,1.5"/>
<line x1="971.5" y1="662.0" x2="971.5" y2="683.0" stroke="#f0e000" stroke-width="1.2" stroke-dasharray="1.5,1.5"/>
<line x1="1169.0" y1="662.0" x2="1169.0" y2="683.0" stroke="#f0e000" stroke-width="1.2" stroke-dasharray="1.5,1.5"/>
<line x1="1187.0" y1="662.0" x2="1187.0" y2="683.0" stroke="#f0e000" stroke-width="1.2" stroke-dasharray="1.5,1.5"/>
<line x1="1277.0" y1="662.0" x2="1277.0" y2="683.0" stroke="#f0e000" stroke-width="1.2" stroke-dasharray="1.5,1.5"/>
<line x1="1295.0" y1="662.0" x2="1295.0" y2="683.0" stroke="#f0e000" stroke-width="1.2" stroke-dasharray="1.5,1.5"/>
<line x1="1492.5" y1="662.0" x2="1492.5" y2="683.0" stroke="#f0e000" stroke-width="1.2" stroke-dasharray="1.5,1.5"/>
<line x1="1511.5" y1="662.0" x2="1511.5" y2="683.0" stroke="#f0e000" stroke-width="1.2" stroke-dasharray="1.5,1.5"/>
<line x1="1709.0" y1="662.0" x2="1709.0" y2="683.0" stroke="#f0e000" stroke-width="1.2" stroke-dasharray="1.5,1.5"/>
<line x1="1727.0" y1="662.0" x2="1727.0" y2="683.0" stroke="#f0e000" stroke-width="1.2" stroke-dasharray="1.5,1.5"/>
<line x1="1817.0" y1="662.0" x2="1817.0" y2="683.0" stroke="#f0e000" stroke-width="1.2" stroke-dasharray="1.5,1.5"/>
<line x1="1835.0" y1="662.0" x2="1835.0" y2="683.0" stroke="#f0e000" stroke-width="1.2" stroke-dasharray="1.5,1.5"/>
<line x1="2034.5" y1="662.0" x2="2034.5" y2="683.0" stroke="#f0e000" stroke-width="1.2" stroke-dasharray="1.5,1.5"/>
<line x1="698.0" y1="532.0" x2="698.0" y2="546.0" stroke="#e8e8e8" stroke-width="1.2"/>
<path d="M695.5,545 L700.5,545 L698,551 Z" fill="#e8e8e8"/>
<g>
<line x1="329.6" y1="455.0" x2="329.6" y2="849.0" stroke="#e8e8e8" stroke-width="1.3"/>
<line x1="369.8" y1="455.0" x2="369.8" y2="849.0" stroke="#e8e8e8" stroke-width="1.3"/>
<line x1="318.0" y1="462.3" x2="405.0" y2="462.3" stroke="#e8e8e8" stroke-width="1.3"/>
<line x1="359.0" y1="554.0" x2="415.0" y2="554.0" stroke="#e8e8e8" stroke-width="1.3"/>
<line x1="359.0" y1="659.8" x2="402.0" y2="659.8" stroke="#e8e8e8" stroke-width="1.3"/>
<line x1="318.0" y1="841.3" x2="2094.0" y2="841.3" stroke="#e8e8e8" stroke-width="1.3"/>
<line x1="323.6" y1="456.3" x2="335.6" y2="468.3" stroke="#e8e8e8" stroke-width="2.6"/>
<line x1="363.8" y1="456.3" x2="375.8" y2="468.3" stroke="#e8e8e8" stroke-width="2.6"/>
<line x1="363.8" y1="548.0" x2="375.8" y2="560.0" stroke="#e8e8e8" stroke-width="2.6"/>
<line x1="363.8" y1="653.8" x2="375.8" y2="665.8" stroke="#e8e8e8" stroke-width="2.6"/>
<line x1="323.6" y1="835.3" x2="335.6" y2="847.3" stroke="#e8e8e8" stroke-width="2.6"/>
<line x1="363.8" y1="835.3" x2="375.8" y2="847.3" stroke="#e8e8e8" stroke-width="2.6"/>
<line x1="412.0" y1="900.6" x2="2053.0" y2="900.6" stroke="#e8e8e8" stroke-width="1.3"/>
<line x1="412.0" y1="959.6" x2="2053.0" y2="959.6" stroke="#e8e8e8" stroke-width="1.3"/>
<line x1="422.0" y1="856.0" x2="422.0" y2="969.5" stroke="#e8e8e8" stroke-width="1.3"/>
<line x1="416.0" y1="906.6" x2="428.0" y2="894.6" stroke="#e8e8e8" stroke-width="2.6"/>
<line x1="637.7" y1="856.0" x2="637.7" y2="908.0" stroke="#e8e8e8" stroke-width="1.3"/>
<line x1="631.7" y1="906.6" x2="643.7" y2="894.6" stroke="#e8e8e8" stroke-width="2.6"/>
<line x1="746.0" y1="856.0" x2="746.0" y2="908.0" stroke="#e8e8e8" stroke-width="1.3"/>
<line x1="740.0" y1="906.6" x2="752.0" y2="894.6" stroke="#e8e8e8" stroke-width="2.6"/>
<line x1="962.0" y1="856.0" x2="962.0" y2="969.5" stroke="#e8e8e8" stroke-width="1.3"/>
<line x1="956.0" y1="906.6" x2="968.0" y2="894.6" stroke="#e8e8e8" stroke-width="2.6"/>
<line x1="1178.0" y1="856.0" x2="1178.0" y2="908.0" stroke="#e8e8e8" stroke-width="1.3"/>
<line x1="1172.0" y1="906.6" x2="1184.0" y2="894.6" stroke="#e8e8e8" stroke-width="2.6"/>
<line x1="1286.0" y1="856.0" x2="1286.0" y2="908.0" stroke="#e8e8e8" stroke-width="1.3"/>
<line x1="1280.0" y1="906.6" x2="1292.0" y2="894.6" stroke="#e8e8e8" stroke-width="2.6"/>
<line x1="1502.0" y1="856.0" x2="1502.0" y2="969.5" stroke="#e8e8e8" stroke-width="1.3"/>
<line x1="1496.0" y1="906.6" x2="1508.0" y2="894.6" stroke="#e8e8e8" stroke-width="2.6"/>
<line x1="1718.0" y1="856.0" x2="1718.0" y2="908.0" stroke="#e8e8e8" stroke-width="1.3"/>
<line x1="1712.0" y1="906.6" x2="1724.0" y2="894.6" stroke="#e8e8e8" stroke-width="2.6"/>
<line x1="1826.0" y1="856.0" x2="1826.0" y2="908.0" stroke="#e8e8e8" stroke-width="1.3"/>
<line x1="1820.0" y1="906.6" x2="1832.0" y2="894.6" stroke="#e8e8e8" stroke-width="2.6"/>
<line x1="2043.0" y1="856.0" x2="2043.0" y2="969.5" stroke="#e8e8e8" stroke-width="1.3"/>
<line x1="2037.0" y1="906.6" x2="2049.0" y2="894.6" stroke="#e8e8e8" stroke-width="2.6"/>
<line x1="416.0" y1="965.6" x2="428.0" y2="953.6" stroke="#e8e8e8" stroke-width="2.6"/>
<ellipse cx="422.0" cy="997.3" rx="23.8" ry="27" fill="none" stroke="#e8e8e8" stroke-width="1.4"/>
<line x1="956.0" y1="965.6" x2="968.0" y2="953.6" stroke="#e8e8e8" stroke-width="2.6"/>
<ellipse cx="962.0" cy="997.3" rx="23.8" ry="27" fill="none" stroke="#e8e8e8" stroke-width="1.4"/>
<line x1="1496.0" y1="965.6" x2="1508.0" y2="953.6" stroke="#e8e8e8" stroke-width="2.6"/>
<ellipse cx="1502.0" cy="997.3" rx="23.8" ry="27" fill="none" stroke="#e8e8e8" stroke-width="1.4"/>
<line x1="2037.0" y1="965.6" x2="2049.0" y2="953.6" stroke="#e8e8e8" stroke-width="2.6"/>
<ellipse cx="2043.0" cy="997.3" rx="23.8" ry="27" fill="none" stroke="#e8e8e8" stroke-width="1.4"/>
<text x="422.0" y="1010.0" font-size="34" fill="#e0e0e0" text-anchor="middle" textLength="22" lengthAdjust="spacingAndGlyphs">A</text>
<text x="962.0" y="1010.0" font-size="34" fill="#e0e0e0" text-anchor="middle" textLength="22" lengthAdjust="spacingAndGlyphs">B</text>
<text x="1502.0" y="1010.0" font-size="34" fill="#e0e0e0" text-anchor="middle" textLength="22" lengthAdjust="spacingAndGlyphs">C</text>
<text x="2043.0" y="1010.0" font-size="34" fill="#e0e0e0" text-anchor="middle" textLength="22" lengthAdjust="spacingAndGlyphs">D</text>
</g>
<text x="529.9" y="893.0" font-size="18" fill="#00ff00" text-anchor="middle" textLength="37" lengthAdjust="spacingAndGlyphs">8000</text>
<text x="691.9" y="893.0" font-size="18" fill="#00ff00" text-anchor="middle" textLength="37" lengthAdjust="spacingAndGlyphs">4000</text>
<text x="854.0" y="893.0" font-size="18" fill="#00ff00" text-anchor="middle" textLength="37" lengthAdjust="spacingAndGlyphs">8000</text>
<text x="1070.0" y="893.0" font-size="18" fill="#00ff00" text-anchor="middle" textLength="37" lengthAdjust="spacingAndGlyphs">8000</text>
<text x="1232.0" y="893.0" font-size="18" fill="#00ff00" text-anchor="middle" textLength="37" lengthAdjust="spacingAndGlyphs">4000</text>
<text x="1394.0" y="893.0" font-size="18" fill="#00ff00" text-anchor="middle" textLength="37" lengthAdjust="spacingAndGlyphs">8000</text>
<text x="1610.0" y="893.0" font-size="18" fill="#00ff00" text-anchor="middle" textLength="37" lengthAdjust="spacingAndGlyphs">8000</text>
<text x="1772.0" y="893.0" font-size="18" fill="#00ff00" text-anchor="middle" textLength="37" lengthAdjust="spacingAndGlyphs">4000</text>
<text x="1934.5" y="893.0" font-size="18" fill="#00ff00" text-anchor="middle" textLength="37" lengthAdjust="spacingAndGlyphs">8000</text>
<text x="692.0" y="952.0" font-size="18" fill="#00ff00" text-anchor="middle" textLength="46" lengthAdjust="spacingAndGlyphs">20000</text>
<text x="1232.0" y="952.0" font-size="18" fill="#00ff00" text-anchor="middle" textLength="46" lengthAdjust="spacingAndGlyphs">20000</text>
<text x="1772.5" y="952.0" font-size="18" fill="#00ff00" text-anchor="middle" textLength="46" lengthAdjust="spacingAndGlyphs">20000</text>
<text x="0.0" y="0.0" font-size="16.5" fill="#00ff00" text-anchor="middle" textLength="38" lengthAdjust="spacingAndGlyphs" transform="translate(362.8,508.7) rotate(-90)">3000</text>
<text x="0.0" y="0.0" font-size="16.5" fill="#00ff00" text-anchor="middle" textLength="38" lengthAdjust="spacingAndGlyphs" transform="translate(362.8,606.7) rotate(-90)">3500</text>
<text x="0.0" y="0.0" font-size="16.5" fill="#00ff00" text-anchor="middle" textLength="38" lengthAdjust="spacingAndGlyphs" transform="translate(362.8,750.5) rotate(-90)">6000</text>
<text x="0.0" y="0.0" font-size="17" fill="#00ff00" text-anchor="middle" textLength="191" lengthAdjust="spacingAndGlyphs" transform="translate(322.8,652) rotate(-90)">12500 EAVES HEIGHT</text>
<text x="1280.6" y="286.3" font-size="12" fill="#e8e8e8" text-anchor="start" textLength="135.5" lengthAdjust="spacingAndGlyphs">STANDARD RIDGE VENTILATOR.</text>
<polyline points="1240.0,362.0 1277.0,292.5 1421.0,292.5" fill="none" stroke="#e8e8e8" stroke-width="1.3"/>
<text x="1232.5" y="341.3" font-size="12" fill="#e8e8e8" text-anchor="middle" textLength="66" lengthAdjust="spacingAndGlyphs">SYMMETRICAL</text>
<text x="1234.5" y="356.3" font-size="12" fill="#e8e8e8" text-anchor="middle" textLength="32" lengthAdjust="spacingAndGlyphs">ABOUT</text>
<text x="1402.5" y="361.3" font-size="12" fill="#e8e8e8" text-anchor="middle" textLength="136" lengthAdjust="spacingAndGlyphs">24g PREPAINTED TRIMFLUTE</text>
<text x="1402.5" y="376.3" font-size="12" fill="#e8e8e8" text-anchor="middle" textLength="40" lengthAdjust="spacingAndGlyphs">ROOFING</text>
<text x="1402.5" y="391.3" font-size="12" fill="#e8e8e8" text-anchor="middle" textLength="35" lengthAdjust="spacingAndGlyphs">SHEETS</text>
<line x1="1365.5" y1="381.0" x2="1357.5" y2="411.0" stroke="#e8e8e8" stroke-width="1.2"/>
<path d="M1356.5,416.0 L1354.5,406.0 L1360.5,408.0 Z" fill="#e8e8e8"/>
<text x="1100.0" y="515.3" font-size="12" fill="#e8e8e8" text-anchor="middle" textLength="80" lengthAdjust="spacingAndGlyphs">457x191x67KG/M</text>
<text x="1100.0" y="530.3" font-size="12" fill="#e8e8e8" text-anchor="middle" textLength="52" lengthAdjust="spacingAndGlyphs">MAIN BEAM</text>
<line x1="1098.0" y1="532.0" x2="1098.0" y2="547.0" stroke="#e8e8e8" stroke-width="1.2"/>
<path d="M1095.5,545 L1100.5,545 L1098,551 Z" fill="#e8e8e8"/>
<text x="986.0" y="500.3" font-size="12" fill="#e8e8e8" text-anchor="start" textLength="82" lengthAdjust="spacingAndGlyphs">406x178x54KG/M</text>
<line x1="975.0" y1="499.0" x2="986.0" y2="499.0" stroke="#e8e8e8" stroke-width="1.2"/>
<path d="M968,499 L976,496.5 L976,501.5 Z" fill="#e8e8e8"/>
<text x="1821.1" y="286.3" font-size="12" fill="#e8e8e8" text-anchor="start" textLength="135.5" lengthAdjust="spacingAndGlyphs">STANDARD RIDGE VENTILATOR.</text>
<polyline points="1780.5,362.0 1817.5,292.5 1961.5,292.5" fill="none" stroke="#e8e8e8" stroke-width="1.3"/>
<text x="1773.0" y="341.3" font-size="12" fill="#e8e8e8" text-anchor="middle" textLength="66" lengthAdjust="spacingAndGlyphs">SYMMETRICAL</text>
<text x="1775.0" y="356.3" font-size="12" fill="#e8e8e8" text-anchor="middle" textLength="32" lengthAdjust="spacingAndGlyphs">ABOUT</text>
<text x="1943.0" y="361.3" font-size="12" fill="#e8e8e8" text-anchor="middle" textLength="136" lengthAdjust="spacingAndGlyphs">24g PREPAINTED TRIMFLUTE</text>
<text x="1943.0" y="376.3" font-size="12" fill="#e8e8e8" text-anchor="middle" textLength="40" lengthAdjust="spacingAndGlyphs">ROOFING</text>
<text x="1943.0" y="391.3" font-size="12" fill="#e8e8e8" text-anchor="middle" textLength="35" lengthAdjust="spacingAndGlyphs">SHEETS</text>
<line x1="1906.0" y1="381.0" x2="1898.0" y2="411.0" stroke="#e8e8e8" stroke-width="1.2"/>
<path d="M1897.0,416.0 L1895.0,406.0 L1901.0,408.0 Z" fill="#e8e8e8"/>
<text x="1848.0" y="515.3" font-size="12" fill="#e8e8e8" text-anchor="middle" textLength="80" lengthAdjust="spacingAndGlyphs">457x191x67KG/M</text>
<text x="1848.0" y="530.3" font-size="12" fill="#e8e8e8" text-anchor="middle" textLength="52" lengthAdjust="spacingAndGlyphs">MAIN BEAM</text>
<line x1="1848.0" y1="532.0" x2="1848.0" y2="547.0" stroke="#e8e8e8" stroke-width="1.2"/>
<path d="M1845.5,545 L1850.5,545 L1848.0,551 Z" fill="#e8e8e8"/>
<text x="1526.5" y="500.3" font-size="12" fill="#e8e8e8" text-anchor="start" textLength="82" lengthAdjust="spacingAndGlyphs">406x178x54KG/M</text>
<line x1="1515.5" y1="499.0" x2="1526.5" y2="499.0" stroke="#e8e8e8" stroke-width="1.2"/>
<path d="M1508.5,499 L1516.5,496.5 L1516.5,501.5 Z" fill="#e8e8e8"/>
<text x="1165.0" y="424.0" font-size="12" fill="#ff2020" text-anchor="middle" textLength="17" lengthAdjust="spacingAndGlyphs">15°</text>
<polyline points="1152.0,428.5 1183.0,428.5 1183.0,409.0" fill="none" stroke="#e8e8e8" stroke-width="1.3"/>
<text x="1198.0" y="424.3" font-size="12" fill="#e8e8e8" text-anchor="middle" textLength="18" lengthAdjust="spacingAndGlyphs">268</text>
<text x="1165.0" y="442.3" font-size="12" fill="#e8e8e8" text-anchor="middle" textLength="23" lengthAdjust="spacingAndGlyphs">1000</text>
<text x="1887.0" y="439.0" font-size="12" fill="#ff2020" text-anchor="middle" textLength="17" lengthAdjust="spacingAndGlyphs">15°</text>
<polyline points="1870.0,424.0 1870.0,443.5 1900.0,443.5" fill="none" stroke="#e8e8e8" stroke-width="1.3"/>
<text x="1855.0" y="439.3" font-size="12" fill="#e8e8e8" text-anchor="middle" textLength="18" lengthAdjust="spacingAndGlyphs">268</text>
<text x="1887.0" y="456.3" font-size="12" fill="#e8e8e8" text-anchor="middle" textLength="23" lengthAdjust="spacingAndGlyphs">1000</text>
<text x="1131.0" y="466.3" font-size="12" fill="#e8e8e8" text-anchor="middle" textLength="98" lengthAdjust="spacingAndGlyphs">305x102x25KG/M UB</text>
<text x="1133.0" y="481.3" font-size="12" fill="#e8e8e8" text-anchor="middle" textLength="78" lengthAdjust="spacingAndGlyphs">PORTAL RAFTER</text>
<line x1="1076.0" y1="445.0" x2="1083.0" y2="463.0" stroke="#e8e8e8" stroke-width="1.2"/>
<path d="M1074,440 L1073,449 L1078,447 Z" fill="#e8e8e8"/>
<text x="1673.0" y="478.3" font-size="12" fill="#e8e8e8" text-anchor="middle" textLength="98" lengthAdjust="spacingAndGlyphs">305x102x25KG/M UB</text>
<text x="1676.0" y="493.3" font-size="12" fill="#e8e8e8" text-anchor="middle" textLength="78" lengthAdjust="spacingAndGlyphs">PORTAL RAFTER</text>
<line x1="1616.0" y1="447.0" x2="1622.0" y2="468.0" stroke="#e8e8e8" stroke-width="1.2"/>
<path d="M1614,442 L1613,451 L1618,449 Z" fill="#e8e8e8"/>
<text x="1932.0" y="501.3" font-size="12" fill="#e8e8e8" text-anchor="start" textLength="79" lengthAdjust="spacingAndGlyphs">356x171x45KG/M</text>
<line x1="2011.0" y1="499.0" x2="2024.0" y2="499.0" stroke="#e8e8e8" stroke-width="1.2"/>
<path d="M2030,499 L2022,496.5 L2022,501.5 Z" fill="#e8e8e8"/>
<text x="1058.4" y="618.3" font-size="12" fill="#e8e8e8" text-anchor="middle" textLength="80" lengthAdjust="spacingAndGlyphs">457x191x67KG/M</text>
<text x="1058.4" y="633.3" font-size="12" fill="#e8e8e8" text-anchor="middle" textLength="52" lengthAdjust="spacingAndGlyphs">MAIN BEAM</text>
<line x1="1060.4" y1="638.0" x2="1060.4" y2="653.0" stroke="#e8e8e8" stroke-width="1.2"/>
<path d="M1057.9,651 L1062.9,651 L1060.4,657 Z" fill="#e8e8e8"/>
<text x="1382.0" y="618.3" font-size="12" fill="#e8e8e8" text-anchor="middle" textLength="80" lengthAdjust="spacingAndGlyphs">457x191x67KG/M</text>
<text x="1382.0" y="633.3" font-size="12" fill="#e8e8e8" text-anchor="middle" textLength="52" lengthAdjust="spacingAndGlyphs">MAIN BEAM</text>
<line x1="1384.0" y1="638.0" x2="1384.0" y2="653.0" stroke="#e8e8e8" stroke-width="1.2"/>
<path d="M1381.5,651 L1386.5,651 L1384,657 Z" fill="#e8e8e8"/>
<text x="1598.0" y="618.3" font-size="12" fill="#e8e8e8" text-anchor="middle" textLength="80" lengthAdjust="spacingAndGlyphs">457x191x67KG/M</text>
<text x="1598.0" y="633.3" font-size="12" fill="#e8e8e8" text-anchor="middle" textLength="52" lengthAdjust="spacingAndGlyphs">MAIN BEAM</text>
<line x1="1600.0" y1="638.0" x2="1600.0" y2="653.0" stroke="#e8e8e8" stroke-width="1.2"/>
<path d="M1597.5,651 L1602.5,651 L1600,657 Z" fill="#e8e8e8"/>
<text x="1922.0" y="618.3" font-size="12" fill="#e8e8e8" text-anchor="middle" textLength="80" lengthAdjust="spacingAndGlyphs">457x191x67KG/M</text>
<text x="1922.0" y="633.3" font-size="12" fill="#e8e8e8" text-anchor="middle" textLength="52" lengthAdjust="spacingAndGlyphs">MAIN BEAM</text>
<line x1="1924.0" y1="638.0" x2="1924.0" y2="653.0" stroke="#e8e8e8" stroke-width="1.2"/>
<path d="M1921.5,651 L1926.5,651 L1924,657 Z" fill="#e8e8e8"/>
<text x="1236.0" y="615.3" font-size="12" fill="#e8e8e8" text-anchor="middle" textLength="82" lengthAdjust="spacingAndGlyphs">406x178x54KG/M</text>
<text x="1236.0" y="630.3" font-size="12" fill="#e8e8e8" text-anchor="middle" textLength="38" lengthAdjust="spacingAndGlyphs">COLUMN</text>
<line x1="1191.0" y1="619.0" x2="1206.0" y2="619.0" stroke="#e8e8e8" stroke-width="1.2"/>
<path d="M1185,619 L1193,616.5 L1193,621.5 Z" fill="#e8e8e8"/>
<line x1="1259.0" y1="619.0" x2="1274.0" y2="619.0" stroke="#e8e8e8" stroke-width="1.2"/>
<path d="M1280,619 L1272,616.5 L1272,621.5 Z" fill="#e8e8e8"/>
<text x="1776.0" y="615.3" font-size="12" fill="#e8e8e8" text-anchor="middle" textLength="82" lengthAdjust="spacingAndGlyphs">406x178x54KG/M</text>
<text x="1776.0" y="630.3" font-size="12" fill="#e8e8e8" text-anchor="middle" textLength="38" lengthAdjust="spacingAndGlyphs">COLUMN</text>
<line x1="1731.0" y1="619.0" x2="1746.0" y2="619.0" stroke="#e8e8e8" stroke-width="1.2"/>
<path d="M1725,619 L1733,616.5 L1733,621.5 Z" fill="#e8e8e8"/>
<line x1="1799.0" y1="619.0" x2="1814.0" y2="619.0" stroke="#e8e8e8" stroke-width="1.2"/>
<path d="M1820,619 L1812,616.5 L1812,621.5 Z" fill="#e8e8e8"/>
<text x="1039.0" y="752.6" font-size="12" fill="#e8e8e8" text-anchor="middle" textLength="81" lengthAdjust="spacingAndGlyphs">533x210x82KG/M</text>
<text x="1041.5" y="767.8" font-size="12" fill="#e8e8e8" text-anchor="middle" textLength="128" lengthAdjust="spacingAndGlyphs" xml:space="preserve">COLUMN PLUS 6MM  PLATE</text>
<line x1="976.0" y1="756.0" x2="988.0" y2="756.0" stroke="#e8e8e8" stroke-width="1.2"/>
<path d="M970,756 L978,753.5 L978,758.5 Z" fill="#e8e8e8"/>
<text x="1232.0" y="752.6" font-size="12" fill="#e8e8e8" text-anchor="middle" textLength="81" lengthAdjust="spacingAndGlyphs">533x210x82KG/M</text>
<text x="1232.0" y="767.6" font-size="12" fill="#e8e8e8" text-anchor="middle" textLength="38" lengthAdjust="spacingAndGlyphs">COLUMN</text>
<line x1="1191.0" y1="755.8" x2="1206.0" y2="755.8" stroke="#e8e8e8" stroke-width="1.2"/>
<path d="M1185,755.8 L1193,753.3 L1193,758.3 Z" fill="#e8e8e8"/>
<line x1="1259.0" y1="755.8" x2="1274.0" y2="755.8" stroke="#e8e8e8" stroke-width="1.2"/>
<path d="M1280,755.8 L1272,753.3 L1272,758.3 Z" fill="#e8e8e8"/>
<text x="1776.0" y="754.3" font-size="12" fill="#e8e8e8" text-anchor="middle" textLength="81" lengthAdjust="spacingAndGlyphs">533x210x82KG/M</text>
<text x="1776.0" y="769.3" font-size="12" fill="#e8e8e8" text-anchor="middle" textLength="38" lengthAdjust="spacingAndGlyphs">COLUMN</text>
<line x1="1732.0" y1="757.5" x2="1747.0" y2="757.5" stroke="#e8e8e8" stroke-width="1.2"/>
<path d="M1726,757.5 L1734,755 L1734,760 Z" fill="#e8e8e8"/>
<line x1="1799.0" y1="757.5" x2="1814.0" y2="757.5" stroke="#e8e8e8" stroke-width="1.2"/>
<path d="M1820,757.5 L1812,755 L1812,760 Z" fill="#e8e8e8"/>
<text x="1585.0" y="753.0" font-size="12" fill="#e8e8e8" text-anchor="middle" textLength="81" lengthAdjust="spacingAndGlyphs">533x210x82KG/M</text>
<text x="1598.0" y="768.1" font-size="12" fill="#e8e8e8" text-anchor="middle" textLength="94" lengthAdjust="spacingAndGlyphs" xml:space="preserve">COLUMN  PLUS 6MM</text>
<text x="1585.0" y="783.3" font-size="12" fill="#e8e8e8" text-anchor="middle" textLength="34" lengthAdjust="spacingAndGlyphs">PLATE.</text>
<line x1="1516.0" y1="756.0" x2="1627.0" y2="756.0" stroke="#e8e8e8" stroke-width="1.2"/>
<path d="M1510,756 L1518,753.5 L1518,758.5 Z" fill="#e8e8e8"/>
<text x="1959.0" y="745.1" font-size="12" fill="#e8e8e8" text-anchor="middle" textLength="80" lengthAdjust="spacingAndGlyphs">457x191x67KG/M</text>
<text x="1959.0" y="760.8" font-size="12" fill="#e8e8e8" text-anchor="middle" textLength="38" lengthAdjust="spacingAndGlyphs">COLUMN</text>
<line x1="1907.0" y1="748.0" x2="2028.0" y2="748.0" stroke="#e8e8e8" stroke-width="1.2"/>
<path d="M2036,748 L2028,745.5 L2028,750.5 Z" fill="#e8e8e8"/>
<text x="1040.8" y="1125.5" font-size="25" fill="#e0e0e0" text-anchor="start" textLength="346" lengthAdjust="spacingAndGlyphs">SECTION -: X - X.(WAREHOUSE)</text>
<line x1="1040.0" y1="1131.2" x2="1388.0" y2="1131.2" stroke="#d8d8d8" stroke-width="1.4"/>
<line x1="300.4" y1="1122.7" x2="300.4" y2="1176.0" stroke="#e8e8e8" stroke-width="1.2"/>
<line x1="300.4" y1="1176.0" x2="348.8" y2="1176.0" stroke="#e8e8e8" stroke-width="1.2"/>
<rect x="296.3" y="1171.3" width="9.4" height="9.4" fill="none" stroke="#e8e8e8" stroke-width="1.2"/>
<polyline points="302.0,1104.0 308.0,1110.0 314.0,1104.0" fill="none" stroke="#e8e8e8" stroke-width="1.2"/>
<line x1="308.0" y1="1110.0" x2="308.0" y2="1117.5" stroke="#e8e8e8" stroke-width="1.2"/>
<line x1="353.0" y1="1161.0" x2="365.4" y2="1174.8" stroke="#e8e8e8" stroke-width="1.2"/>
<line x1="365.4" y1="1161.0" x2="353.0" y2="1174.8" stroke="#e8e8e8" stroke-width="1.2"/>
<line x1="1277.0" y1="256.0" x2="2117.0" y2="256.0" stroke="#e0e0e0" stroke-width="1.5"/>
<line x1="1849.6" y1="256.0" x2="1849.6" y2="895.0" stroke="#e8e8e8" stroke-width="1.3"/>
<rect x="1846" y="252.5" width="7" height="7" fill="#000" stroke="#e8e8e8" stroke-width="1.2"/>
<rect x="2057" y="270" width="9" height="3" fill="#e8e8e8"/>
<rect x="2076" y="266" width="8" height="8" fill="none" stroke="#e8e8e8" stroke-width="1.6"/><path d="M2079,266 L2079,263.5 L2087,263.5 L2087,271 L2084,271" fill="none" stroke="#e8e8e8" stroke-width="1.4"/>
<path d="M2096,265 L2105,274 M2105,265 L2096,274" stroke="#e8e8e8" stroke-width="2"/>
<text x="2036.6" y="316.0" font-size="22" fill="#8c8c8c" text-anchor="middle" textLength="17" lengthAdjust="spacingAndGlyphs" font-weight="bold" opacity="0.9">N</text>
<text x="2036.6" y="436.0" font-size="22" fill="#8c8c8c" text-anchor="middle" textLength="17" lengthAdjust="spacingAndGlyphs" font-weight="bold" opacity="0.9">S</text>
<text x="1982.0" y="375.0" font-size="22" fill="#8c8c8c" text-anchor="middle" textLength="17" lengthAdjust="spacingAndGlyphs" font-weight="bold" opacity="0.9">W</text>
<text x="2090.0" y="375.0" font-size="22" fill="#8c8c8c" text-anchor="middle" textLength="17" lengthAdjust="spacingAndGlyphs" font-weight="bold" opacity="0.9">E</text>
<rect x="2014" y="461.5" width="45" height="18" rx="4" fill="#8a8a8a" opacity="0.75"/>
<text x="2030.0" y="475.0" font-size="11" fill="#9a9a9a" text-anchor="middle" textLength="21" lengthAdjust="spacingAndGlyphs">WCS</text>
<path d="M2046,468 L2052,468 L2049,473 Z" fill="#9a9a9a"/>
<rect x="2082" y="507.6" width="30" height="227" rx="4" fill="#3b3b3b" stroke="#4c4c4c"/>
<g stroke="#262626" fill="none" stroke-width="1.6"><circle cx="2097" cy="539" r="9.5"/><circle cx="2097" cy="538" r="5"/><path d="M2089,544 L2093,541 M2105,544 L2101,541"/><path transform="translate(0,7)" d="M2089,586 Q2085,578 2088,575 L2091,578 L2091,566 Q2093,564 2094,566 L2094,574 L2095,563 Q2097,561 2098,563 L2098,574 L2100,565 Q2102,563 2103,566 L2102,576 L2104,571 Q2107,571 2106,575 L2103,590 Q2097,596 2089,586 Z"/><path d="M2086,604 L2100,618 M2086,618 L2096,608 M2096,604 L2102,610"/><circle cx="2100" cy="618" r="4"/><path d="M2103,621 L2107,625" stroke-width="2.4"/><ellipse cx="2097" cy="658" rx="10" ry="4"/><path d="M2097,645 L2097,666 M2094,649 L2097,645 L2100,649"/><rect x="2086.5" y="688" width="6" height="6"/><rect x="2094" y="688" width="6" height="6"/><rect x="2101.5" y="688" width="6" height="6"/><rect x="2086.5" y="698" width="15" height="13"/><path d="M2091,701 L2098,704.5 L2091,708 Z" fill="#262626"/></g>
<path d="M2094,561 L2100,561 L2097,564 Z M2094,636 L2100,636 L2097,639 Z M2094,677 L2100,677 L2097,680 Z" fill="#262626"/>
<path d="M2087,567.5 L2107,567.5 M2087,683 L2107,683" stroke="#464646" stroke-width="1"/>
</g>
</svg></body></html>
